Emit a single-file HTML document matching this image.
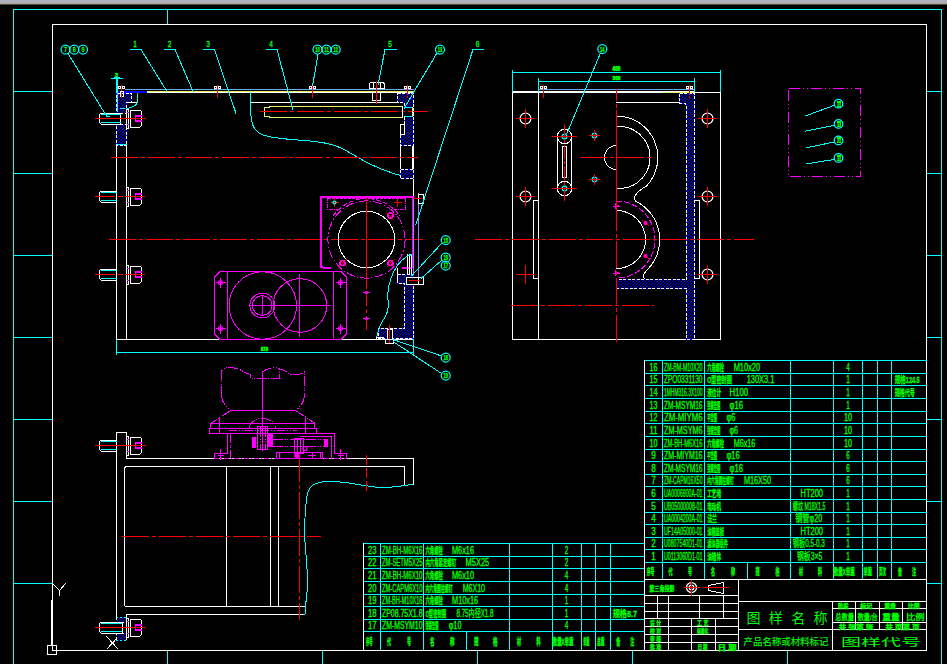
<!DOCTYPE html>
<html lang="zh"><head><meta charset="utf-8"><title>CAD drawing</title>
<style>
html,body{margin:0;padding:0;background:#000;overflow:hidden}
svg{display:block}
.la{font-family:"Liberation Sans","Noto Sans CJK SC",sans-serif}
.cj{font-family:"Liberation Sans","Noto Sans CJK SC",sans-serif}
</style></head><body>
<svg width="947" height="664" viewBox="0 0 947 664" shape-rendering="crispEdges" fill="none">
<rect x="0" y="0" width="947" height="664" fill="#000" stroke="none"/>
<rect x="0" y="0" width="947" height="3" fill="#adb0bb" stroke="none"/>
<rect x="0" y="3" width="947" height="1" fill="#a9a590" stroke="none"/>
<rect x="0" y="4" width="947" height="1" fill="#504d3c" stroke="none"/>
<line x1="13.5" y1="9" x2="13.5" y2="664" stroke="#00ffff" stroke-width="1"/>
<line x1="13" y1="9.5" x2="942" y2="9.5" stroke="#00ffff" stroke-width="1"/>
<line x1="941.5" y1="9" x2="941.5" y2="664" stroke="#00ffff" stroke-width="1"/>
<line x1="52.5" y1="24" x2="52.5" y2="651" stroke="#ffffff" stroke-width="1"/>
<line x1="52" y1="24.5" x2="927" y2="24.5" stroke="#ffffff" stroke-width="1"/>
<line x1="926.5" y1="24" x2="926.5" y2="651" stroke="#ffffff" stroke-width="1"/>
<line x1="52" y1="650.5" x2="927" y2="650.5" stroke="#ffffff" stroke-width="1"/>
<line x1="167.5" y1="9" x2="167.5" y2="24" stroke="#00ffff" stroke-width="1"/>
<line x1="13" y1="91.5" x2="52" y2="91.5" stroke="#00ffff" stroke-width="1"/>
<line x1="927" y1="91.5" x2="941" y2="91.5" stroke="#00ffff" stroke-width="1"/>
<line x1="13" y1="173.5" x2="52" y2="173.5" stroke="#00ffff" stroke-width="1"/>
<line x1="927" y1="173.5" x2="941" y2="173.5" stroke="#00ffff" stroke-width="1"/>
<line x1="13" y1="255.5" x2="52" y2="255.5" stroke="#00ffff" stroke-width="1"/>
<line x1="927" y1="255.5" x2="941" y2="255.5" stroke="#00ffff" stroke-width="1"/>
<line x1="13" y1="337.5" x2="52" y2="337.5" stroke="#00ffff" stroke-width="1"/>
<line x1="927" y1="337.5" x2="941" y2="337.5" stroke="#00ffff" stroke-width="1"/>
<line x1="13" y1="419.5" x2="52" y2="419.5" stroke="#00ffff" stroke-width="1"/>
<line x1="927" y1="419.5" x2="941" y2="419.5" stroke="#00ffff" stroke-width="1"/>
<line x1="13" y1="501.5" x2="52" y2="501.5" stroke="#00ffff" stroke-width="1"/>
<line x1="927" y1="501.5" x2="941" y2="501.5" stroke="#00ffff" stroke-width="1"/>
<line x1="13" y1="583.5" x2="52" y2="583.5" stroke="#00ffff" stroke-width="1"/>
<line x1="927" y1="583.5" x2="941" y2="583.5" stroke="#00ffff" stroke-width="1"/>
<line x1="167.5" y1="651" x2="167.5" y2="664" stroke="#00ffff" stroke-width="1"/>
<line x1="322.5" y1="651" x2="322.5" y2="664" stroke="#00ffff" stroke-width="1"/>
<line x1="477.5" y1="651" x2="477.5" y2="664" stroke="#00ffff" stroke-width="1"/>
<line x1="632.5" y1="651" x2="632.5" y2="664" stroke="#00ffff" stroke-width="1"/>
<line x1="787.5" y1="651" x2="787.5" y2="664" stroke="#00ffff" stroke-width="1"/>
<rect x="47.5" y="645.5" width="9" height="9" stroke="#ffffff" fill="none" stroke-width="1"/>
<rect x="51" y="600" width="2" height="46" fill="#fff" stroke="none"/>
<line x1="53.5" y1="584.5" x2="59.5" y2="590.5" stroke="#ffffff" stroke-width="1"/>
<line x1="65.5" y1="583.5" x2="59.5" y2="590.5" stroke="#ffffff" stroke-width="1"/>
<line x1="59.5" y1="590" x2="59.5" y2="596" stroke="#ffffff" stroke-width="1"/>
<line x1="106.5" y1="636.5" x2="118.5" y2="649.5" stroke="#ffffff" stroke-width="1"/>
<line x1="118.5" y1="636.5" x2="106.5" y2="649.5" stroke="#ffffff" stroke-width="1"/>
<line x1="644" y1="360.5" x2="927" y2="360.5" stroke="#00ffff" stroke-width="1"/>
<line x1="644" y1="373.5" x2="927" y2="373.5" stroke="#00ffff" stroke-width="1"/>
<line x1="644" y1="385.5" x2="927" y2="385.5" stroke="#00ffff" stroke-width="1"/>
<line x1="644" y1="398.5" x2="927" y2="398.5" stroke="#00ffff" stroke-width="1"/>
<line x1="644" y1="411.5" x2="927" y2="411.5" stroke="#00ffff" stroke-width="1"/>
<line x1="644" y1="423.5" x2="927" y2="423.5" stroke="#00ffff" stroke-width="1"/>
<line x1="644" y1="436.5" x2="927" y2="436.5" stroke="#00ffff" stroke-width="1"/>
<line x1="644" y1="449.5" x2="927" y2="449.5" stroke="#00ffff" stroke-width="1"/>
<line x1="644" y1="461.5" x2="927" y2="461.5" stroke="#00ffff" stroke-width="1"/>
<line x1="644" y1="474.5" x2="927" y2="474.5" stroke="#00ffff" stroke-width="1"/>
<line x1="644" y1="486.5" x2="927" y2="486.5" stroke="#00ffff" stroke-width="1"/>
<line x1="644" y1="499.5" x2="927" y2="499.5" stroke="#00ffff" stroke-width="1"/>
<line x1="644" y1="512.5" x2="927" y2="512.5" stroke="#00ffff" stroke-width="1"/>
<line x1="644" y1="524.5" x2="927" y2="524.5" stroke="#00ffff" stroke-width="1"/>
<line x1="644" y1="537.5" x2="927" y2="537.5" stroke="#00ffff" stroke-width="1"/>
<line x1="644" y1="549.5" x2="927" y2="549.5" stroke="#00ffff" stroke-width="1"/>
<line x1="644" y1="562.5" x2="927" y2="562.5" stroke="#00ffff" stroke-width="1"/>
<line x1="662.5" y1="360" x2="662.5" y2="579" stroke="#00ffff" stroke-width="1"/>
<line x1="704.5" y1="360" x2="704.5" y2="579" stroke="#00ffff" stroke-width="1"/>
<line x1="790.5" y1="360" x2="790.5" y2="579" stroke="#00ffff" stroke-width="1"/>
<line x1="833.5" y1="360" x2="833.5" y2="579" stroke="#00ffff" stroke-width="1"/>
<line x1="862.5" y1="360" x2="862.5" y2="579" stroke="#00ffff" stroke-width="1"/>
<line x1="877.5" y1="360" x2="877.5" y2="579" stroke="#00ffff" stroke-width="1"/>
<line x1="891.5" y1="360" x2="891.5" y2="579" stroke="#00ffff" stroke-width="1"/>
<line x1="747.5" y1="562" x2="747.5" y2="579" stroke="#00ffff" stroke-width="1"/>
<line x1="644.5" y1="360" x2="644.5" y2="651" stroke="#ffffff" stroke-width="1"/>
<line x1="644" y1="579.5" x2="927" y2="579.5" stroke="#ffffff" stroke-width="1"/>
<line x1="363" y1="543.5" x2="644" y2="543.5" stroke="#00ffff" stroke-width="1"/>
<line x1="363" y1="556.5" x2="644" y2="556.5" stroke="#00ffff" stroke-width="1"/>
<line x1="363" y1="568.5" x2="644" y2="568.5" stroke="#00ffff" stroke-width="1"/>
<line x1="363" y1="581.5" x2="644" y2="581.5" stroke="#00ffff" stroke-width="1"/>
<line x1="363" y1="594.5" x2="644" y2="594.5" stroke="#00ffff" stroke-width="1"/>
<line x1="363" y1="606.5" x2="644" y2="606.5" stroke="#00ffff" stroke-width="1"/>
<line x1="363" y1="619.5" x2="644" y2="619.5" stroke="#00ffff" stroke-width="1"/>
<line x1="363" y1="631.5" x2="644" y2="631.5" stroke="#00ffff" stroke-width="1"/>
<line x1="380.5" y1="543" x2="380.5" y2="650" stroke="#00ffff" stroke-width="1"/>
<line x1="423.5" y1="543" x2="423.5" y2="650" stroke="#00ffff" stroke-width="1"/>
<line x1="509.5" y1="543" x2="509.5" y2="650" stroke="#00ffff" stroke-width="1"/>
<line x1="552.5" y1="543" x2="552.5" y2="650" stroke="#00ffff" stroke-width="1"/>
<line x1="581.5" y1="543" x2="581.5" y2="650" stroke="#00ffff" stroke-width="1"/>
<line x1="595.5" y1="543" x2="595.5" y2="650" stroke="#00ffff" stroke-width="1"/>
<line x1="610.5" y1="543" x2="610.5" y2="650" stroke="#00ffff" stroke-width="1"/>
<line x1="466.5" y1="631" x2="466.5" y2="650" stroke="#00ffff" stroke-width="1"/>
<line x1="363.5" y1="543" x2="363.5" y2="651" stroke="#ffffff" stroke-width="1"/>
<line x1="644" y1="595.5" x2="738" y2="595.5" stroke="#ffffff" stroke-width="1"/>
<line x1="644" y1="603.5" x2="738" y2="603.5" stroke="#ffffff" stroke-width="1"/>
<line x1="644" y1="611.5" x2="738" y2="611.5" stroke="#ffffff" stroke-width="1"/>
<line x1="644" y1="618.5" x2="738" y2="618.5" stroke="#ffffff" stroke-width="1"/>
<line x1="644" y1="626.5" x2="738" y2="626.5" stroke="#ffffff" stroke-width="1"/>
<line x1="644" y1="634.5" x2="738" y2="634.5" stroke="#ffffff" stroke-width="1"/>
<line x1="644" y1="642.5" x2="738" y2="642.5" stroke="#ffffff" stroke-width="1"/>
<line x1="738.5" y1="579" x2="738.5" y2="650" stroke="#ffffff" stroke-width="1"/>
<line x1="657.5" y1="595" x2="657.5" y2="618" stroke="#ffffff" stroke-width="1"/>
<line x1="668.5" y1="595" x2="668.5" y2="650" stroke="#ffffff" stroke-width="1"/>
<line x1="699.5" y1="595" x2="699.5" y2="618" stroke="#ffffff" stroke-width="1"/>
<line x1="723.5" y1="595" x2="723.5" y2="618" stroke="#ffffff" stroke-width="1"/>
<line x1="691.5" y1="618" x2="691.5" y2="650" stroke="#ffffff" stroke-width="1"/>
<line x1="715.5" y1="618" x2="715.5" y2="650" stroke="#ffffff" stroke-width="1"/>
<line x1="738" y1="601.5" x2="927" y2="601.5" stroke="#ffffff" stroke-width="1"/>
<line x1="738" y1="629.5" x2="927" y2="629.5" stroke="#ffffff" stroke-width="1"/>
<line x1="832.5" y1="601" x2="832.5" y2="650" stroke="#ffffff" stroke-width="1"/>
<line x1="832" y1="608.5" x2="927" y2="608.5" stroke="#ffffff" stroke-width="1"/>
<line x1="832" y1="622.5" x2="927" y2="622.5" stroke="#ffffff" stroke-width="1"/>
<line x1="855.5" y1="601" x2="855.5" y2="629" stroke="#ffffff" stroke-width="1"/>
<line x1="879.5" y1="601" x2="879.5" y2="629" stroke="#ffffff" stroke-width="1"/>
<line x1="902.5" y1="601" x2="902.5" y2="629" stroke="#ffffff" stroke-width="1"/>
<circle cx="691.5" cy="587.5" r="5" stroke="#ffffff" fill="none" stroke-width="1.25" shape-rendering="geometricPrecision"/>
<circle cx="691.5" cy="587.5" r="2.3" stroke="#ffffff" fill="none" stroke-width="1.25" shape-rendering="geometricPrecision"/>
<line x1="684" y1="587.5" x2="700" y2="587.5" stroke="#ff0000" stroke-width="1"/>
<line x1="691.5" y1="580" x2="691.5" y2="596" stroke="#ff0000" stroke-width="1"/>
<path d="M708.5 585.5 L723.5 582.5 L723.5 593.5 L708.5 590.5 Z" stroke="#ffffff" fill="none" stroke-width="1"/>
<line x1="703" y1="587.5" x2="729" y2="587.5" stroke="#ff0000" stroke-width="1"/>
<defs>
<pattern id="hb" width="3" height="3" patternUnits="userSpaceOnUse">
<rect width="3" height="3" fill="#000"/><rect x="0" y="2" width="1" height="1" fill="#0000ff"/><rect x="1" y="1" width="1" height="1" fill="#0000ff"/><rect x="2" y="0" width="1" height="1" fill="#0000ff"/>
</pattern>
</defs>
<line x1="116.5" y1="145" x2="116.5" y2="339" stroke="#ffffff" stroke-width="1"/>
<line x1="126.5" y1="145" x2="126.5" y2="339" stroke="#ffffff" stroke-width="1"/>
<line x1="400.5" y1="145" x2="400.5" y2="170" stroke="#ffffff" stroke-width="1"/>
<line x1="413.5" y1="92" x2="413.5" y2="197" stroke="#ffffff" stroke-width="1"/>
<line x1="412.5" y1="145" x2="412.5" y2="170" stroke="#ffffff" stroke-width="1"/>
<line x1="116" y1="339.5" x2="222" y2="339.5" stroke="#ffffff" stroke-width="1"/>
<line x1="339" y1="339.5" x2="414" y2="339.5" stroke="#ffffff" stroke-width="1"/>
<line x1="125" y1="89.5" x2="414" y2="89.5" stroke="#6ea6f0" stroke-width="1"/>
<line x1="147" y1="91.5" x2="414" y2="91.5" stroke="#e6f064" stroke-width="1"/>
<line x1="147" y1="92.5" x2="414" y2="92.5" stroke="#ffffff" stroke-width="1"/>
<rect x="117" y="91" width="30" height="2" fill="#0000ff" stroke="none"/>
<line x1="250" y1="102.5" x2="404" y2="102.5" stroke="#ffffff" stroke-width="1"/>
<path d="M116.5 93 L131.5 93 L131.5 102 L126.5 102 L126.5 145.5 L116.5 145.5 Z" fill="url(#hb)" stroke="none"/>
<path d="M116.5 93 L131.5 93 L131.5 102 L126.5 102 L126.5 145.5 L116.5 145.5 Z" fill="none" stroke="#0000ff" stroke-width="1"/>
<path d="M116.5 93 L131.5 93 L131.5 102 L126.5 102 L126.5 145.5 L116.5 145.5 Z" fill="none" stroke="#fff" stroke-width="1" stroke-dasharray="3 1.5"/>
<line x1="126" y1="102.5" x2="138" y2="102.5" stroke="#ffffff" stroke-width="1"/>
<line x1="137.5" y1="93" x2="137.5" y2="102" stroke="#00ffff" stroke-width="1"/>
<path d="M137.5 102.5 Q136 106.5 127 108.5" stroke="#00ffff" fill="none" stroke-width="1"/>
<line x1="120" y1="108.5" x2="125" y2="108.5" stroke="#00ffff" stroke-width="1"/>
<line x1="116.5" y1="144.5" x2="126.5" y2="144.5" stroke="#00ffff" stroke-width="1"/>
<line x1="116.5" y1="78" x2="116.5" y2="93" stroke="#00ffff" stroke-width="1"/>
<line x1="117.5" y1="78" x2="117.5" y2="112" stroke="#00ffff" stroke-width="1"/>
<line x1="111" y1="78.5" x2="123" y2="78.5" stroke="#00ffff" stroke-width="1"/>
<line x1="114" y1="77.5" x2="120" y2="77.5" stroke="#00ffff" stroke-width="1"/>
<text x="116.5" y="77" font-size="6" fill="#00ff00" stroke="#00ff00" stroke-width="0.35" text-anchor="middle" font-weight="bold" class="la">3</text>
<rect x="118.0" y="86" width="7" height="3" fill="#fff" stroke="none"/>
<rect x="119.0" y="87" width="1" height="1" fill="#000" stroke="none"/><rect x="123.0" y="87" width="1" height="1" fill="#000" stroke="none"/>
<line x1="121.5" y1="85" x2="121.5" y2="97.5" stroke="#ff0000" stroke-width="1"/>
<rect x="214.0" y="86" width="7" height="3" fill="#fff" stroke="none"/>
<rect x="215.0" y="87" width="1" height="1" fill="#000" stroke="none"/><rect x="219.0" y="87" width="1" height="1" fill="#000" stroke="none"/>
<line x1="217.5" y1="85" x2="217.5" y2="97.5" stroke="#ff0000" stroke-width="1"/>
<rect x="309.0" y="86" width="7" height="3" fill="#fff" stroke="none"/>
<rect x="310.0" y="87" width="1" height="1" fill="#000" stroke="none"/><rect x="314.0" y="87" width="1" height="1" fill="#000" stroke="none"/>
<line x1="312.5" y1="85" x2="312.5" y2="97.5" stroke="#ff0000" stroke-width="1"/>
<rect x="404.0" y="86" width="7" height="3" fill="#fff" stroke="none"/>
<rect x="405.0" y="87" width="1" height="1" fill="#000" stroke="none"/><rect x="409.0" y="87" width="1" height="1" fill="#000" stroke="none"/>
<line x1="407.5" y1="85" x2="407.5" y2="97.5" stroke="#ff0000" stroke-width="1"/>
<rect x="120" y="91" width="3.5" height="5" stroke="#ffffff" fill="none" stroke-width="1"/>
<path d="M370.5 82.5 L383 82.5 L384.5 84 L384.5 88 L369.5 88 L369.5 84 Z" stroke="#ffffff" fill="none" stroke-width="1"/>
<line x1="373.5" y1="83" x2="373.5" y2="88" stroke="#ffffff" stroke-width="1"/>
<line x1="380.5" y1="83" x2="380.5" y2="88" stroke="#ffffff" stroke-width="1"/>
<rect x="372.5" y="92" width="8" height="8.5" stroke="#ffffff" fill="none" stroke-width="1"/>
<line x1="376.5" y1="80.5" x2="376.5" y2="103.5" stroke="#ff0000" stroke-width="1"/>
<path d="M402.5 106.5 L269.5 106.5 L269.5 107.5 L264.5 107.5 L264.5 116.5 L269.5 116.5 L269.5 117.5 L402.5 117.5" stroke="#e6f064" fill="none" stroke-width="1"/>
<line x1="260" y1="111.5" x2="428" y2="111.5" stroke="#ff0000" stroke-width="1" stroke-dasharray="27 3 4 3"/>
<path d="M250.5 92 L250.5 104 C250.5 122 252 130 262 134.5 C272 139 295 139.5 310 141 C330 143 340 146 352 154 C366 163 385 173 413 178.5" stroke="#00ffff" fill="none" stroke-width="1"/>
<path d="M397.5 93 L413.5 93 L413.5 107 L404.5 107 L404.5 102.5 L397.5 102.5 Z" fill="url(#hb)" stroke="none"/>
<path d="M397.5 93 L413.5 93 L413.5 107 L404.5 107 L404.5 102.5 L397.5 102.5 Z" fill="none" stroke="#0000ff" stroke-width="1"/>
<path d="M397.5 93 L413.5 93 L413.5 107 L404.5 107 L404.5 102.5 L397.5 102.5 Z" fill="none" stroke="#fff" stroke-width="1" stroke-dasharray="3 1.5"/>
<path d="M404.5 116.5 L413.5 116.5 L413.5 145.5 L400.5 145.5 L400.5 134 L404.5 134 Z" fill="url(#hb)" stroke="none"/>
<path d="M404.5 116.5 L413.5 116.5 L413.5 145.5 L400.5 145.5 L400.5 134 L404.5 134 Z" fill="none" stroke="#0000ff" stroke-width="1"/>
<path d="M404.5 116.5 L413.5 116.5 L413.5 145.5 L400.5 145.5 L400.5 134 L404.5 134 Z" fill="none" stroke="#fff" stroke-width="1" stroke-dasharray="3 1.5"/>
<rect x="400.5" y="124" width="4" height="10" stroke="#ffffff" fill="none" stroke-width="1"/>
<line x1="404.5" y1="107.5" x2="413" y2="107.5" stroke="#00ffff" stroke-width="1"/>
<line x1="404.5" y1="116.5" x2="413" y2="116.5" stroke="#00ffff" stroke-width="1"/>
<line x1="412.5" y1="107" x2="412.5" y2="117" stroke="#e6f064" stroke-width="1"/>
<line x1="402.5" y1="106" x2="402.5" y2="118" stroke="#ffffff" stroke-width="1"/>
<line x1="121.5" y1="93" x2="121.5" y2="97.5" stroke="#ff0000" stroke-width="1" stroke-dasharray="2 1"/>
<line x1="407.5" y1="93" x2="407.5" y2="97.5" stroke="#ff0000" stroke-width="1" stroke-dasharray="2 1"/>
<path d="M400.5 169.5 L413.5 169.5 L413.5 178.5 L400.5 178.5 Z" fill="url(#hb)" stroke="none"/>
<path d="M400.5 169.5 L413.5 169.5 L413.5 178.5 L400.5 178.5 Z" fill="none" stroke="#0000ff" stroke-width="1"/>
<path d="M400.5 169.5 L413.5 169.5 L413.5 178.5 L400.5 178.5 Z" fill="none" stroke="#fff" stroke-width="1" stroke-dasharray="3 1.5"/>
<line x1="111" y1="157.5" x2="418" y2="157.5" stroke="#ff0000" stroke-width="1" stroke-dasharray="27 3 4 3"/>
<line x1="109" y1="239.5" x2="423" y2="239.5" stroke="#ff0000" stroke-width="1" stroke-dasharray="27 3 4 3"/>
<rect x="120.5" y="113.0" width="6.0" height="11" fill="#000" stroke="none"/>
<line x1="120.5" y1="113.0" x2="126.5" y2="113.0" stroke="#ffffff" stroke-width="1" stroke-dasharray="2 2"/>
<line x1="120.5" y1="124.0" x2="126.5" y2="124.0" stroke="#ffffff" stroke-width="1" stroke-dasharray="2 2"/>
<path d="M120.5 113.0 L101.0 113.0 L99.5 114.5 L99.5 122.5 L101.0 124.0 L120.5 124.0 Z" stroke="#ffffff" fill="#000" stroke-width="1"/>
<line x1="101.0" y1="114.5" x2="120.5" y2="114.5" stroke="#00ffff" stroke-width="1"/>
<line x1="101.0" y1="122.5" x2="120.5" y2="122.5" stroke="#00ffff" stroke-width="1"/>
<rect x="126.5" y="109.0" width="2" height="19" stroke="#ffffff" fill="#000" stroke-width="1"/>
<path d="M130.5 110.0 L140 110.0 L141.5 111.5 L141.5 125.5 L140 127.0 L130.5 127.0 Z" stroke="#ffffff" fill="none" stroke-width="1"/>
<path d="M141.5 116.0 L136 116.0 Q134.5 118.5 136 121.0 L141.5 121.0" stroke="#ff00ff" fill="none" stroke-width="1.6"/>
<line x1="127" y1="112.5" x2="128.5" y2="112.5" stroke="#ff00ff" stroke-width="1"/>
<line x1="127" y1="124.5" x2="128.5" y2="124.5" stroke="#ff00ff" stroke-width="1"/>
<line x1="95" y1="118.5" x2="146" y2="118.5" stroke="#ff0000" stroke-width="1"/>
<path d="M116.5 191.0 L101.0 191.0 L99.5 192.5 L99.5 200.5 L101.0 202.0 L116.5 202.0" stroke="#ffffff" fill="none" stroke-width="1"/>
<line x1="101.0" y1="192.5" x2="116.5" y2="192.5" stroke="#00ffff" stroke-width="1"/>
<line x1="101.0" y1="200.5" x2="116.5" y2="200.5" stroke="#00ffff" stroke-width="1"/>
<rect x="126.5" y="187.0" width="2" height="19" stroke="#ffffff" fill="#000" stroke-width="1"/>
<path d="M130.5 188.0 L140 188.0 L141.5 189.5 L141.5 203.5 L140 205.0 L130.5 205.0 Z" stroke="#ffffff" fill="none" stroke-width="1"/>
<path d="M141.5 194.0 L136 194.0 Q134.5 196.5 136 199.0 L141.5 199.0" stroke="#ff00ff" fill="none" stroke-width="1.6"/>
<line x1="127" y1="190.5" x2="128.5" y2="190.5" stroke="#ff00ff" stroke-width="1"/>
<line x1="127" y1="202.5" x2="128.5" y2="202.5" stroke="#ff00ff" stroke-width="1"/>
<line x1="95" y1="196.5" x2="146" y2="196.5" stroke="#ff0000" stroke-width="1" stroke-dasharray="20 3 5 2"/>
<path d="M116.5 269.0 L101.0 269.0 L99.5 270.5 L99.5 278.5 L101.0 280.0 L116.5 280.0" stroke="#ffffff" fill="none" stroke-width="1"/>
<line x1="101.0" y1="270.5" x2="116.5" y2="270.5" stroke="#00ffff" stroke-width="1"/>
<line x1="101.0" y1="278.5" x2="116.5" y2="278.5" stroke="#00ffff" stroke-width="1"/>
<rect x="126.5" y="265.0" width="2" height="19" stroke="#ffffff" fill="#000" stroke-width="1"/>
<path d="M130.5 266.0 L140 266.0 L141.5 267.5 L141.5 281.5 L140 283.0 L130.5 283.0 Z" stroke="#ffffff" fill="none" stroke-width="1"/>
<path d="M141.5 272.0 L136 272.0 Q134.5 274.5 136 277.0 L141.5 277.0" stroke="#ff00ff" fill="none" stroke-width="1.6"/>
<line x1="127" y1="268.5" x2="128.5" y2="268.5" stroke="#ff00ff" stroke-width="1"/>
<line x1="127" y1="280.5" x2="128.5" y2="280.5" stroke="#ff00ff" stroke-width="1"/>
<line x1="95" y1="274.5" x2="146" y2="274.5" stroke="#ff0000" stroke-width="1" stroke-dasharray="20 3 5 2"/>
<path d="M220 271.5 L341 271.5 L346.5 277 L346.5 334 L341 339.5 L220 339.5 L214.5 334 L214.5 277 Z" stroke="#ff00ff" fill="none" stroke-width="1"/>
<line x1="227.5" y1="272" x2="227.5" y2="339" stroke="#ff00ff" stroke-width="1"/>
<line x1="333.5" y1="272" x2="333.5" y2="339" stroke="#ff00ff" stroke-width="1"/>
<circle cx="262.8" cy="305.5" r="33.7" stroke="#ff00ff" fill="none" stroke-width="1"/>
<circle cx="299.9" cy="305.5" r="26.8" stroke="#ff00ff" fill="none" stroke-width="1"/>
<circle cx="262.3" cy="305.5" r="12.4" stroke="#ff00ff" fill="none" stroke-width="1"/>
<circle cx="262.3" cy="305.5" r="9.9" stroke="#ff00ff" fill="none" stroke-width="1"/>
<line x1="250" y1="305.5" x2="331" y2="305.5" stroke="#ff00ff" stroke-width="1"/>
<line x1="262.5" y1="296" x2="262.5" y2="316" stroke="#ff00ff" stroke-width="1"/>
<line x1="299.5" y1="274" x2="299.5" y2="337" stroke="#ff00ff" stroke-width="1"/>
<circle cx="220.5" cy="282.5" r="2" stroke="#ff00ff" fill="none" stroke-width="1.25" shape-rendering="geometricPrecision"/>
<line x1="215.5" y1="282.5" x2="225.5" y2="282.5" stroke="#ff00ff" stroke-width="1"/>
<line x1="220.5" y1="277.5" x2="220.5" y2="287.5" stroke="#ff00ff" stroke-width="1"/>
<circle cx="220.5" cy="328.5" r="2" stroke="#ff00ff" fill="none" stroke-width="1.25" shape-rendering="geometricPrecision"/>
<line x1="215.5" y1="328.5" x2="225.5" y2="328.5" stroke="#ff00ff" stroke-width="1"/>
<line x1="220.5" y1="323.5" x2="220.5" y2="333.5" stroke="#ff00ff" stroke-width="1"/>
<circle cx="340.5" cy="282.5" r="2" stroke="#ff00ff" fill="none" stroke-width="1.25" shape-rendering="geometricPrecision"/>
<line x1="335.5" y1="282.5" x2="345.5" y2="282.5" stroke="#ff00ff" stroke-width="1"/>
<line x1="340.5" y1="277.5" x2="340.5" y2="287.5" stroke="#ff00ff" stroke-width="1"/>
<circle cx="340.5" cy="328.5" r="2" stroke="#ff00ff" fill="none" stroke-width="1.25" shape-rendering="geometricPrecision"/>
<line x1="335.5" y1="328.5" x2="345.5" y2="328.5" stroke="#ff00ff" stroke-width="1"/>
<line x1="340.5" y1="323.5" x2="340.5" y2="333.5" stroke="#ff00ff" stroke-width="1"/>
<path d="M330.5 267.5 L323 267.5 Q320.5 267.5 320.5 265 L320.5 196.5 L412.5 196.5 L412.5 268" stroke="#ff00ff" fill="none" stroke-width="2"/>
<line x1="402" y1="267.5" x2="412" y2="267.5" stroke="#ff00ff" stroke-width="2"/>
<path d="M340 209.5 L327.5 209.5 L327.5 198 M392.5 209.5 L405.5 209.5 L405.5 198" stroke="#ff00ff" fill="none" stroke-width="1" stroke-dasharray="4 1 1 1"/>
<line x1="328" y1="198.5" x2="405" y2="198.5" stroke="#ff00ff" stroke-width="1" stroke-dasharray="3 1"/>
<circle cx="366.5" cy="239.5" r="28.2" stroke="#ffffff" fill="none" stroke-width="1"/>
<circle cx="366.5" cy="239.5" r="38.6" stroke="#ff00ff" fill="none" stroke-width="1" stroke-dasharray="9 2 1.5 2"/>
<path d="M333 216 A41 41 0 0 1 400 216" stroke="#ff00ff" fill="none" stroke-width="1" stroke-dasharray="5 2"/>
<circle cx="390.5" cy="215.5" r="2.5" stroke="#ff00ff" fill="none" stroke-width="1.5"/>
<line x1="386.5" y1="211.5" x2="394.5" y2="219.5" stroke="#ff0000" stroke-width="0.7"/>
<line x1="386.5" y1="219.5" x2="394.5" y2="211.5" stroke="#ff0000" stroke-width="0.7"/>
<circle cx="342.5" cy="263" r="2.5" stroke="#ff00ff" fill="none" stroke-width="1.5"/>
<line x1="338.5" y1="259" x2="346.5" y2="267" stroke="#ff0000" stroke-width="0.7"/>
<line x1="338.5" y1="267" x2="346.5" y2="259" stroke="#ff0000" stroke-width="0.7"/>
<circle cx="390.5" cy="263" r="2.5" stroke="#ff00ff" fill="none" stroke-width="1.5"/>
<line x1="386.5" y1="259" x2="394.5" y2="267" stroke="#ff0000" stroke-width="0.7"/>
<line x1="386.5" y1="267" x2="394.5" y2="259" stroke="#ff0000" stroke-width="0.7"/>
<line x1="330.5" y1="202.5" x2="338.5" y2="202.5" stroke="#ff0000" stroke-width="1"/>
<line x1="334.5" y1="198.5" x2="334.5" y2="206.5" stroke="#ff0000" stroke-width="1"/>
<line x1="393.5" y1="202.5" x2="401.5" y2="202.5" stroke="#ff0000" stroke-width="1"/>
<line x1="397.5" y1="198.5" x2="397.5" y2="206.5" stroke="#ff0000" stroke-width="1"/>
<circle cx="334.5" cy="202.5" r="1.5" stroke="#00ffff" fill="none" stroke-width="1.25" shape-rendering="geometricPrecision"/>
<line x1="366.5" y1="198" x2="366.5" y2="285" stroke="#ff0000" stroke-width="1"/>
<line x1="366.5" y1="285" x2="366.5" y2="332" stroke="#ff0000" stroke-width="1" stroke-dasharray="4 3 14 3"/>
<line x1="363" y1="292.5" x2="370" y2="292.5" stroke="#ff00ff" stroke-width="1"/>
<circle cx="366.5" cy="292.5" r="1" stroke="#ff00ff" fill="#ff00ff" stroke-width="1.25" shape-rendering="geometricPrecision"/>
<line x1="363" y1="318.5" x2="370" y2="318.5" stroke="#ff00ff" stroke-width="1"/>
<circle cx="366.5" cy="318.5" r="1" stroke="#ff00ff" fill="#ff00ff" stroke-width="1.25" shape-rendering="geometricPrecision"/>
<line x1="413.5" y1="197" x2="413.5" y2="284" stroke="#9a7bff" stroke-width="1"/>
<line x1="418.5" y1="193" x2="418.5" y2="284" stroke="#9a7bff" stroke-width="1"/>
<line x1="413" y1="284.5" x2="419" y2="284.5" stroke="#9a7bff" stroke-width="1"/>
<rect x="418.5" y="194" width="5" height="9.5" stroke="#ffffff" fill="none" stroke-width="1"/>
<line x1="413" y1="198.5" x2="421" y2="198.5" stroke="#ff0000" stroke-width="1"/>
<path d="M397.5 274.5 L413.5 274.5 L413.5 338 L378.5 338 L378.5 328.5 L404.5 328.5 L404.5 283.5 L397.5 283.5 Z" fill="url(#hb)" stroke="none"/>
<path d="M397.5 274.5 L413.5 274.5 L413.5 338 L378.5 338 L378.5 328.5 L404.5 328.5 L404.5 283.5 L397.5 283.5 Z" fill="none" stroke="#0000ff" stroke-width="1"/>
<path d="M397.5 274.5 L413.5 274.5 L413.5 338 L378.5 338 L378.5 328.5 L404.5 328.5 L404.5 283.5 L397.5 283.5 Z" fill="none" stroke="#fff" stroke-width="1" stroke-dasharray="3 1.5"/>
<line x1="397.5" y1="268" x2="397.5" y2="283" stroke="#ffffff" stroke-width="1"/>
<line x1="407.5" y1="254" x2="407.5" y2="275" stroke="#ffffff" stroke-width="1"/>
<line x1="409.5" y1="254" x2="409.5" y2="275" stroke="#ffffff" stroke-width="1"/>
<line x1="411.5" y1="254" x2="411.5" y2="275" stroke="#ffffff" stroke-width="1"/>
<rect x="406.5" y="277" width="16.5" height="7" stroke="#ffffff" fill="#000" stroke-width="1"/>
<line x1="418.5" y1="277" x2="418.5" y2="284" stroke="#ffffff" stroke-width="1"/>
<line x1="409" y1="280.5" x2="420" y2="280.5" stroke="#ff0000" stroke-width="1"/>
<path d="M412 254.5 C404 256.5 398 263 393.5 272 C389 282 387 290 388 300 C389 308 388 313 382 322 C379 328 377 333 376.5 339" stroke="#00ffff" fill="none" stroke-width="1"/>
<rect x="387.5" y="329" width="5" height="10" stroke="#ffffff" fill="#000" stroke-width="1"/>
<line x1="389.5" y1="325" x2="389.5" y2="343" stroke="#ff0000" stroke-width="1"/>
<rect x="385.5" y="339.5" width="8" height="4" stroke="#ffffff" fill="none" stroke-width="1"/>
<rect x="376.5" y="337.5" width="7" height="2" stroke="#ffffff" fill="none" stroke-width="1"/>
<line x1="116" y1="352.5" x2="414" y2="352.5" stroke="#00ffff" stroke-width="1"/>
<line x1="116.5" y1="340" x2="116.5" y2="355" stroke="#00ffff" stroke-width="1"/>
<line x1="413.5" y1="339" x2="413.5" y2="355" stroke="#00ffff" stroke-width="1"/>
<text x="264.5" y="351" font-size="5.5" fill="#00ff00" stroke="#00ff00" stroke-width="0.7" text-anchor="middle" font-weight="bold" class="la" textLength="7" lengthAdjust="spacingAndGlyphs">873</text>
<circle cx="65.5" cy="49.5" r="4.5" stroke="#00ffff" fill="none" stroke-width="1.25" shape-rendering="geometricPrecision"/>
<text x="65.5" y="52.1" font-size="7" fill="#00ff00" stroke="#00ff00" stroke-width="0.35" text-anchor="middle" font-weight="normal" class="la" textLength="3" lengthAdjust="spacingAndGlyphs">7</text>
<circle cx="74.2" cy="49.5" r="4.5" stroke="#00ffff" fill="none" stroke-width="1.25" shape-rendering="geometricPrecision"/>
<text x="74.2" y="52.1" font-size="7" fill="#00ff00" stroke="#00ff00" stroke-width="0.35" text-anchor="middle" font-weight="normal" class="la" textLength="3" lengthAdjust="spacingAndGlyphs">8</text>
<circle cx="83" cy="49.5" r="4.5" stroke="#00ffff" fill="none" stroke-width="1.25" shape-rendering="geometricPrecision"/>
<text x="83" y="52.1" font-size="7" fill="#00ff00" stroke="#00ff00" stroke-width="0.35" text-anchor="middle" font-weight="normal" class="la" textLength="3" lengthAdjust="spacingAndGlyphs">9</text>
<line x1="68" y1="53.5" x2="106.5" y2="116" stroke="#00ffff" stroke-width="1"/>
<line x1="106" y1="116.5" x2="110" y2="116.5" stroke="#00ffff" stroke-width="1"/>
<line x1="130" y1="49.5" x2="141" y2="49.5" stroke="#00ffff" stroke-width="1"/>
<text x="135" y="47" font-size="8.5" fill="#00ff00" stroke="#00ff00" stroke-width="0.35" text-anchor="middle" font-weight="normal" class="la" textLength="3.6" lengthAdjust="spacingAndGlyphs">1</text>
<line x1="141" y1="49.5" x2="167" y2="91.5" stroke="#00ffff" stroke-width="1"/>
<line x1="164" y1="49.5" x2="175" y2="49.5" stroke="#00ffff" stroke-width="1"/>
<text x="169.5" y="47" font-size="8.5" fill="#00ff00" stroke="#00ff00" stroke-width="0.35" text-anchor="middle" font-weight="normal" class="la" textLength="3.6" lengthAdjust="spacingAndGlyphs">2</text>
<line x1="175" y1="49.5" x2="193.5" y2="92.5" stroke="#00ffff" stroke-width="1"/>
<line x1="203" y1="49.5" x2="214" y2="49.5" stroke="#00ffff" stroke-width="1"/>
<text x="208" y="47" font-size="8.5" fill="#00ff00" stroke="#00ff00" stroke-width="0.35" text-anchor="middle" font-weight="normal" class="la" textLength="3.6" lengthAdjust="spacingAndGlyphs">3</text>
<line x1="214.5" y1="49.5" x2="236" y2="113.5" stroke="#00ffff" stroke-width="1"/>
<line x1="266" y1="49.5" x2="277" y2="49.5" stroke="#00ffff" stroke-width="1"/>
<text x="271" y="47" font-size="8.5" fill="#00ff00" stroke="#00ff00" stroke-width="0.35" text-anchor="middle" font-weight="normal" class="la" textLength="3.6" lengthAdjust="spacingAndGlyphs">4</text>
<line x1="277" y1="49.5" x2="293" y2="110" stroke="#00ffff" stroke-width="1"/>
<circle cx="317.5" cy="49.5" r="4.5" stroke="#00ffff" fill="none" stroke-width="1.25" shape-rendering="geometricPrecision"/>
<text x="317.5" y="52.1" font-size="7" fill="#00ff00" stroke="#00ff00" stroke-width="0.35" text-anchor="middle" font-weight="bold" class="la" textLength="4.4" lengthAdjust="spacingAndGlyphs">10</text>
<circle cx="326.5" cy="49.5" r="4.5" stroke="#00ffff" fill="none" stroke-width="1.25" shape-rendering="geometricPrecision"/>
<text x="326.5" y="52.1" font-size="7" fill="#00ff00" stroke="#00ff00" stroke-width="0.35" text-anchor="middle" font-weight="bold" class="la" textLength="4.4" lengthAdjust="spacingAndGlyphs">11</text>
<circle cx="335.7" cy="49.5" r="4.5" stroke="#00ffff" fill="none" stroke-width="1.25" shape-rendering="geometricPrecision"/>
<text x="335.7" y="52.1" font-size="7" fill="#00ff00" stroke="#00ff00" stroke-width="0.35" text-anchor="middle" font-weight="bold" class="la" textLength="4.4" lengthAdjust="spacingAndGlyphs">12</text>
<line x1="318" y1="54" x2="312.5" y2="86.5" stroke="#00ffff" stroke-width="1"/>
<line x1="385" y1="49.5" x2="397" y2="49.5" stroke="#00ffff" stroke-width="1"/>
<text x="390" y="47" font-size="8.5" fill="#00ff00" stroke="#00ff00" stroke-width="0.35" text-anchor="middle" font-weight="normal" class="la" textLength="3.6" lengthAdjust="spacingAndGlyphs">5</text>
<line x1="385" y1="49.5" x2="378" y2="85" stroke="#00ffff" stroke-width="1"/>
<circle cx="440" cy="49.5" r="4.5" stroke="#00ffff" fill="none" stroke-width="1.25" shape-rendering="geometricPrecision"/>
<text x="440" y="52.1" font-size="7" fill="#00ff00" stroke="#00ff00" stroke-width="0.35" text-anchor="middle" font-weight="bold" class="la" textLength="4.4" lengthAdjust="spacingAndGlyphs">13</text>
<line x1="437" y1="53" x2="404" y2="108.5" stroke="#00ffff" stroke-width="1"/>
<line x1="473" y1="49.5" x2="484" y2="49.5" stroke="#00ffff" stroke-width="1"/>
<text x="477.5" y="47" font-size="8.5" fill="#00ff00" stroke="#00ff00" stroke-width="0.35" text-anchor="middle" font-weight="normal" class="la" textLength="3.6" lengthAdjust="spacingAndGlyphs">6</text>
<line x1="473" y1="49.5" x2="415.5" y2="225.5" stroke="#00ffff" stroke-width="1"/>
<circle cx="445.7" cy="240" r="4.5" stroke="#00ffff" fill="none" stroke-width="1.25" shape-rendering="geometricPrecision"/>
<text x="445.7" y="242.6" font-size="7" fill="#00ff00" stroke="#00ff00" stroke-width="0.35" text-anchor="middle" font-weight="bold" class="la" textLength="4.4" lengthAdjust="spacingAndGlyphs">15</text>
<circle cx="445.7" cy="257.5" r="4.5" stroke="#00ffff" fill="none" stroke-width="1.25" shape-rendering="geometricPrecision"/>
<text x="445.7" y="260.1" font-size="7" fill="#00ff00" stroke="#00ff00" stroke-width="0.35" text-anchor="middle" font-weight="bold" class="la" textLength="4.4" lengthAdjust="spacingAndGlyphs">16</text>
<circle cx="445.7" cy="265.5" r="4.5" stroke="#00ffff" fill="none" stroke-width="1.25" shape-rendering="geometricPrecision"/>
<text x="445.7" y="268.1" font-size="7" fill="#00ff00" stroke="#00ff00" stroke-width="0.35" text-anchor="middle" font-weight="bold" class="la" textLength="4.4" lengthAdjust="spacingAndGlyphs">17</text>
<line x1="442" y1="243" x2="411.5" y2="276" stroke="#00ffff" stroke-width="1"/>
<line x1="442" y1="260" x2="421" y2="278.5" stroke="#00ffff" stroke-width="1"/>
<circle cx="445.7" cy="357.5" r="4.5" stroke="#00ffff" fill="none" stroke-width="1.25" shape-rendering="geometricPrecision"/>
<text x="445.7" y="360.1" font-size="7" fill="#00ff00" stroke="#00ff00" stroke-width="0.35" text-anchor="middle" font-weight="bold" class="la" textLength="4.4" lengthAdjust="spacingAndGlyphs">18</text>
<circle cx="445.7" cy="375.5" r="4.5" stroke="#00ffff" fill="none" stroke-width="1.25" shape-rendering="geometricPrecision"/>
<text x="445.7" y="378.1" font-size="7" fill="#00ff00" stroke="#00ff00" stroke-width="0.35" text-anchor="middle" font-weight="bold" class="la" textLength="4.4" lengthAdjust="spacingAndGlyphs">19</text>
<line x1="441.5" y1="356" x2="393" y2="339.5" stroke="#00ffff" stroke-width="1"/>
<line x1="441.5" y1="373.5" x2="393" y2="341.5" stroke="#00ffff" stroke-width="1"/>
<line x1="512.5" y1="92" x2="512.5" y2="339" stroke="#ffffff" stroke-width="1"/>
<line x1="538.5" y1="92" x2="538.5" y2="339" stroke="#ffffff" stroke-width="1"/>
<line x1="720.5" y1="92" x2="720.5" y2="339" stroke="#ffffff" stroke-width="1"/>
<line x1="512" y1="339.5" x2="721" y2="339.5" stroke="#ffffff" stroke-width="1"/>
<rect x="512" y="91" width="183" height="2" fill="#fff" stroke="none"/>
<line x1="694" y1="92.5" x2="721" y2="92.5" stroke="#ffffff" stroke-width="1"/>
<line x1="538" y1="89.5" x2="695" y2="89.5" stroke="#6ea6f0" stroke-width="1"/>
<line x1="662" y1="92.5" x2="694" y2="92.5" stroke="#e6f064" stroke-width="1"/>
<line x1="512" y1="72.5" x2="721" y2="72.5" stroke="#00ffff" stroke-width="1"/>
<line x1="512.5" y1="70" x2="512.5" y2="92" stroke="#00ffff" stroke-width="1"/>
<line x1="720.5" y1="70" x2="720.5" y2="92" stroke="#00ffff" stroke-width="1"/>
<line x1="538" y1="81.5" x2="695" y2="81.5" stroke="#00ffff" stroke-width="1"/>
<line x1="538.5" y1="78" x2="538.5" y2="92" stroke="#00ffff" stroke-width="1"/>
<line x1="694.5" y1="78" x2="694.5" y2="92" stroke="#00ffff" stroke-width="1"/>
<text x="616.5" y="71" font-size="6.5" fill="#00ff00" stroke="#00ff00" stroke-width="0.6" text-anchor="middle" font-weight="bold" class="la" textLength="8" lengthAdjust="spacingAndGlyphs">400</text>
<text x="616.5" y="79.7" font-size="6" fill="#00ff00" stroke="#00ff00" stroke-width="0.6" text-anchor="middle" font-weight="bold" class="la" textLength="8" lengthAdjust="spacingAndGlyphs">300</text>
<rect x="540.0" y="86" width="7" height="3" fill="#fff" stroke="none"/>
<rect x="541.0" y="87" width="1" height="1" fill="#000" stroke="none"/><rect x="545.0" y="87" width="1" height="1" fill="#000" stroke="none"/>
<line x1="543.5" y1="85" x2="543.5" y2="97.5" stroke="#ff0000" stroke-width="1"/>
<rect x="686.0" y="86" width="7" height="3" fill="#fff" stroke="none"/>
<rect x="687.0" y="87" width="1" height="1" fill="#000" stroke="none"/><rect x="691.0" y="87" width="1" height="1" fill="#000" stroke="none"/>
<line x1="689.5" y1="85" x2="689.5" y2="97.5" stroke="#ff0000" stroke-width="1"/>
<path d="M679.5 93 L694.5 93 L694.5 339 L686.5 339 L686.5 288.5 L616.5 288.5 L616.5 279.5 L686.5 279.5 L686.5 105 L684.5 103 L679.5 103 Z" fill="url(#hb)" stroke="none"/>
<path d="M679.5 93 L694.5 93 L694.5 339 L686.5 339 L686.5 288.5 L616.5 288.5 L616.5 279.5 L686.5 279.5 L686.5 105 L684.5 103 L679.5 103 Z" fill="none" stroke="#0000ff" stroke-width="1"/>
<path d="M679.5 93 L694.5 93 L694.5 339 L686.5 339 L686.5 288.5 L616.5 288.5 L616.5 279.5 L686.5 279.5 L686.5 105 L684.5 103 L679.5 103 Z" fill="none" stroke="#fff" stroke-width="1" stroke-dasharray="3 1.5"/>
<line x1="616" y1="102.5" x2="680" y2="102.5" stroke="#ffffff" stroke-width="1"/>
<line x1="689.5" y1="93" x2="689.5" y2="97.5" stroke="#ff0000" stroke-width="1" stroke-dasharray="2 1"/>
<path d="M538.5 200.5 L533.5 200.5 L533.5 278.5 L538.5 278.5" stroke="#ffffff" fill="none" stroke-width="1"/>
<path d="M694.5 200.5 L699.5 200.5 L699.5 278.5 L694.5 278.5" stroke="#ffffff" fill="none" stroke-width="1"/>
<circle cx="525.5" cy="118.5" r="5.4" stroke="#ffffff" fill="none" stroke-width="1.25" shape-rendering="geometricPrecision"/>
<line x1="516.0" y1="118.5" x2="535.0" y2="118.5" stroke="#ff0000" stroke-width="1"/>
<line x1="525.5" y1="109.0" x2="525.5" y2="128.0" stroke="#ff0000" stroke-width="1"/>
<circle cx="525.5" cy="196.5" r="5.4" stroke="#ffffff" fill="none" stroke-width="1.25" shape-rendering="geometricPrecision"/>
<line x1="516.0" y1="196.5" x2="535.0" y2="196.5" stroke="#ff0000" stroke-width="1"/>
<line x1="525.5" y1="187.0" x2="525.5" y2="206.0" stroke="#ff0000" stroke-width="1"/>
<line x1="516.0" y1="274.5" x2="535.0" y2="274.5" stroke="#ff0000" stroke-width="1"/>
<line x1="525.5" y1="265.0" x2="525.5" y2="284.0" stroke="#ff0000" stroke-width="1"/>
<circle cx="707.5" cy="118.5" r="5.4" stroke="#ffffff" fill="none" stroke-width="1.25" shape-rendering="geometricPrecision"/>
<line x1="698.0" y1="118.5" x2="717.0" y2="118.5" stroke="#ff0000" stroke-width="1"/>
<line x1="707.5" y1="109.0" x2="707.5" y2="128.0" stroke="#ff0000" stroke-width="1"/>
<circle cx="707.5" cy="196.5" r="5.4" stroke="#ffffff" fill="none" stroke-width="1.25" shape-rendering="geometricPrecision"/>
<line x1="698.0" y1="196.5" x2="717.0" y2="196.5" stroke="#ff0000" stroke-width="1"/>
<line x1="707.5" y1="187.0" x2="707.5" y2="206.0" stroke="#ff0000" stroke-width="1"/>
<circle cx="707.5" cy="274.5" r="5.4" stroke="#ffffff" fill="none" stroke-width="1.25" shape-rendering="geometricPrecision"/>
<line x1="698.0" y1="274.5" x2="717.0" y2="274.5" stroke="#ff0000" stroke-width="1"/>
<line x1="707.5" y1="265.0" x2="707.5" y2="284.0" stroke="#ff0000" stroke-width="1"/>
<path d="M557.5 188.5 L557.5 136.5 A7.2 7.2 0 0 1 571.9 136.5 L571.9 188.5 A7.2 7.2 0 0 1 557.5 188.5" stroke="#ffffff" fill="none" stroke-width="1"/>
<circle cx="564.5" cy="136.5" r="7.2" stroke="#ffffff" fill="none" stroke-width="1"/>
<circle cx="564.5" cy="188.5" r="7.2" stroke="#ffffff" fill="none" stroke-width="1"/>
<path d="M562.5 177.5 L562.5 148 A2 2 0 0 1 566.5 148 L566.5 177.5 Z" stroke="#ffffff" fill="none" stroke-width="1"/>
<circle cx="564.5" cy="136.5" r="2.3" stroke="#00ffff" fill="none" stroke-width="1.25" shape-rendering="geometricPrecision"/>
<circle cx="564.5" cy="188.5" r="2.3" stroke="#00ffff" fill="none" stroke-width="1.25" shape-rendering="geometricPrecision"/>
<line x1="552" y1="136.5" x2="576.5" y2="136.5" stroke="#ff0000" stroke-width="1"/>
<line x1="552" y1="188.5" x2="576.5" y2="188.5" stroke="#ff0000" stroke-width="1"/>
<line x1="564.5" y1="124" x2="564.5" y2="201" stroke="#ff0000" stroke-width="1" stroke-dasharray="14 2 3 2"/>
<circle cx="594.5" cy="135.5" r="2.3" stroke="#00ffff" fill="none" stroke-width="1.25" shape-rendering="geometricPrecision"/>
<line x1="589" y1="135.5" x2="600" y2="135.5" stroke="#ff0000" stroke-width="1"/>
<line x1="594.5" y1="130" x2="594.5" y2="141" stroke="#ff0000" stroke-width="1"/>
<circle cx="594.5" cy="179.5" r="2.3" stroke="#00ffff" fill="none" stroke-width="1.25" shape-rendering="geometricPrecision"/>
<line x1="589" y1="179.5" x2="600" y2="179.5" stroke="#ff0000" stroke-width="1"/>
<line x1="594.5" y1="174" x2="594.5" y2="185" stroke="#ff0000" stroke-width="1"/>
<path d="M616.5 145.5 A12 12 0 0 0 616.5 169.5" stroke="#ffffff" fill="none" stroke-width="1"/>
<path d="M616.5 126.5 A31 31 0 0 1 621.5 188.5 L616.5 188.5" stroke="#ffffff" fill="none" stroke-width="1"/>
<path d="M616.5 210.5 A29 29 0 0 1 616.5 268.5" stroke="#ffffff" fill="none" stroke-width="1"/>
<path d="M616.5 116.0 A41.5 41.5 0 0 1 646.5 186.0 Q630.5 195.5 636.0 201.5 A42.5 42.5 0 0 1 647.5 269.5 Q640.5 276.5 645.5 279.5" stroke="#ffffff" fill="none" stroke-width="1"/>
<path d="M616.5 201.0 A38.5 38.5 0 0 1 616.5 278.0" stroke="#ff00ff" fill="none" stroke-width="1" stroke-dasharray="6 2"/>
<circle cx="645.5" cy="223.0" r="1.5" stroke="#ff00ff" fill="#ff00ff" stroke-width="1.25" shape-rendering="geometricPrecision"/>
<line x1="642.5" y1="220.0" x2="648.5" y2="226.0" stroke="#ff0000" stroke-width="1" stroke-dasharray="1 1"/>
<circle cx="645.5" cy="256.0" r="1.5" stroke="#ff00ff" fill="#ff00ff" stroke-width="1.25" shape-rendering="geometricPrecision"/>
<line x1="642.5" y1="253.0" x2="648.5" y2="259.0" stroke="#ff0000" stroke-width="1" stroke-dasharray="1 1"/>
<line x1="612.5" y1="206.0" x2="619.5" y2="206.0" stroke="#ff00ff" stroke-width="1"/>
<path d="M615.5 204.0 L618.5 206.0 L615.5 208.0 Z" stroke="#ff00ff" fill="#ff00ff" stroke-width="1"/>
<line x1="612.5" y1="273.0" x2="619.5" y2="273.0" stroke="#ff00ff" stroke-width="1"/>
<path d="M615.5 271.0 L618.5 273.0 L615.5 275.0 Z" stroke="#ff00ff" fill="#ff00ff" stroke-width="1"/>
<line x1="616.5" y1="88.5" x2="616.5" y2="341.5" stroke="#ff0000" stroke-width="1" stroke-dasharray="12 3 4 3 120 3 4 3 27 3 4 3 27 3 4 3 27 3 4 3"/>
<line x1="616.5" y1="110" x2="616.5" y2="227" stroke="#ff0000" stroke-width="1"/>
<line x1="580" y1="157.5" x2="653" y2="157.5" stroke="#ff0000" stroke-width="1" stroke-dasharray="27 3 4 3"/>
<line x1="475" y1="239.5" x2="754" y2="239.5" stroke="#ff0000" stroke-width="1" stroke-dasharray="27 3 4 3"/>
<line x1="511" y1="305.5" x2="654" y2="305.5" stroke="#ff0000" stroke-width="1" stroke-dasharray="27 3 4 3"/>
<circle cx="602.3" cy="49" r="4.5" stroke="#00ffff" fill="none" stroke-width="1.25" shape-rendering="geometricPrecision"/>
<text x="602.3" y="51.6" font-size="7" fill="#00ff00" stroke="#00ff00" stroke-width="0.35" text-anchor="middle" font-weight="bold" class="la" textLength="4.4" lengthAdjust="spacingAndGlyphs">14</text>
<line x1="600.5" y1="53" x2="566.5" y2="134.5" stroke="#00ffff" stroke-width="1"/>
<path d="M788.5 88.5 L860.5 88.5 L860.5 176.5 L788.5 176.5 Z" stroke="#ff00ff" fill="none" stroke-width="1" stroke-dasharray="11 3 1 3 1 3"/>
<circle cx="838.5" cy="103.7" r="4.3" stroke="#00ffff" fill="none" stroke-width="1.25" shape-rendering="geometricPrecision"/>
<rect x="836.5" y="100.7" width="4" height="6" fill="#00ff00" stroke="none"/>
<text x="838.5" y="105.7" font-size="4" fill="#003000" stroke="#003000" stroke-width="0" text-anchor="middle" font-weight="bold" class="la">20</text>
<line x1="834.5" y1="105.2" x2="804.8" y2="116.2" stroke="#00ffff" stroke-width="1"/>
<circle cx="838.5" cy="123.9" r="4.3" stroke="#00ffff" fill="none" stroke-width="1.25" shape-rendering="geometricPrecision"/>
<rect x="836.5" y="120.9" width="4" height="6" fill="#00ff00" stroke="none"/>
<text x="838.5" y="125.9" font-size="4" fill="#003000" stroke="#003000" stroke-width="0" text-anchor="middle" font-weight="bold" class="la">21</text>
<line x1="834.5" y1="125.4" x2="804.8" y2="131.3" stroke="#00ffff" stroke-width="1"/>
<circle cx="838.5" cy="140.4" r="4.3" stroke="#00ffff" fill="none" stroke-width="1.25" shape-rendering="geometricPrecision"/>
<rect x="836.5" y="137.4" width="4" height="6" fill="#00ff00" stroke="none"/>
<text x="838.5" y="142.4" font-size="4" fill="#003000" stroke="#003000" stroke-width="0" text-anchor="middle" font-weight="bold" class="la">22</text>
<line x1="834.5" y1="141.9" x2="805.7" y2="148" stroke="#00ffff" stroke-width="1"/>
<circle cx="838.5" cy="157.9" r="4.3" stroke="#00ffff" fill="none" stroke-width="1.25" shape-rendering="geometricPrecision"/>
<rect x="836.5" y="154.9" width="4" height="6" fill="#00ff00" stroke="none"/>
<text x="838.5" y="159.9" font-size="4" fill="#003000" stroke="#003000" stroke-width="0" text-anchor="middle" font-weight="bold" class="la">23</text>
<line x1="834.5" y1="159.4" x2="805.7" y2="164" stroke="#00ffff" stroke-width="1"/>
<path d="M116.5 617 L116.5 432.5 L126.5 432.5 L126.5 458.5 L413.5 458.5 L413.5 484.5" stroke="#ffffff" fill="none" stroke-width="1"/>
<path d="M404.5 484.5 L404.5 466.5 L127 466.5 Q124.5 466.5 124.5 469 L124.5 604 Q124.5 606.5 127 606.5 L305 606.5" stroke="#ffffff" fill="none" stroke-width="1"/>
<path d="M126.5 617 L126.5 614.5 L305 614.5" stroke="#ffffff" fill="none" stroke-width="1"/>
<line x1="226.5" y1="467" x2="226.5" y2="606" stroke="#ffffff" stroke-width="1"/>
<line x1="270.5" y1="467" x2="270.5" y2="606" stroke="#ffffff" stroke-width="1"/>
<line x1="278.5" y1="467" x2="278.5" y2="606" stroke="#ffffff" stroke-width="1"/>
<path d="M413.5 484.5 C405 485 395 487.5 383 487.5 C368 487.5 352 482 333 481.5 C318 481 311 484 308 492 C305.5 500 305 515 304.5 530 C304.5 545 308 570 307.5 585 C307 598 305 605 305 614.5" stroke="#00ffff" fill="none" stroke-width="1"/>
<line x1="299.5" y1="455" x2="299.5" y2="620" stroke="#ff0000" stroke-width="1" stroke-dasharray="27 3 4 3"/>
<line x1="366.5" y1="454.5" x2="366.5" y2="491.5" stroke="#ff0000" stroke-width="1" stroke-dasharray="10 3"/>
<line x1="122" y1="536.5" x2="321" y2="536.5" stroke="#ff0000" stroke-width="1" stroke-dasharray="27 3 4 3"/>
<path d="M116.5 617 L126.5 617 L126.5 640.5 L116.5 640.5 Z" fill="url(#hb)" stroke="none"/>
<line x1="116" y1="617.5" x2="127" y2="617.5" stroke="#00ffff" stroke-width="1" stroke-dasharray="2 2"/>
<line x1="116" y1="640.5" x2="127" y2="640.5" stroke="#00ffff" stroke-width="1" stroke-dasharray="2 2"/>
<line x1="116.5" y1="617" x2="116.5" y2="640" stroke="#ffffff" stroke-width="1" stroke-dasharray="3 2"/>
<line x1="126.5" y1="617" x2="126.5" y2="640" stroke="#ffffff" stroke-width="1" stroke-dasharray="3 2"/>
<path d="M116.5 440.0 L101.0 440.0 L99.5 441.5 L99.5 449.5 L101.0 451.0 L116.5 451.0" stroke="#ffffff" fill="none" stroke-width="1"/>
<line x1="101.0" y1="441.5" x2="116.5" y2="441.5" stroke="#00ffff" stroke-width="1"/>
<line x1="101.0" y1="449.5" x2="116.5" y2="449.5" stroke="#00ffff" stroke-width="1"/>
<rect x="126.5" y="436.0" width="2" height="19" stroke="#ffffff" fill="#000" stroke-width="1"/>
<path d="M130.5 437.0 L140 437.0 L141.5 438.5 L141.5 452.5 L140 454.0 L130.5 454.0 Z" stroke="#ffffff" fill="none" stroke-width="1"/>
<path d="M141.5 443.0 L136 443.0 Q134.5 445.5 136 448.0 L141.5 448.0" stroke="#ff00ff" fill="none" stroke-width="1.6"/>
<line x1="127" y1="439.5" x2="128.5" y2="439.5" stroke="#ff00ff" stroke-width="1"/>
<line x1="127" y1="451.5" x2="128.5" y2="451.5" stroke="#ff00ff" stroke-width="1"/>
<line x1="95" y1="445.5" x2="146" y2="445.5" stroke="#ff0000" stroke-width="1"/>
<rect x="122" y="622.0" width="4.5" height="11" fill="#000" stroke="none"/>
<line x1="122" y1="622.0" x2="126.5" y2="622.0" stroke="#ffffff" stroke-width="1" stroke-dasharray="2 2"/>
<line x1="122" y1="633.0" x2="126.5" y2="633.0" stroke="#ffffff" stroke-width="1" stroke-dasharray="2 2"/>
<path d="M122 622.0 L101.0 622.0 L99.5 623.5 L99.5 631.5 L101.0 633.0 L122 633.0 Z" stroke="#ffffff" fill="#000" stroke-width="1"/>
<line x1="101.0" y1="623.5" x2="122" y2="623.5" stroke="#00ffff" stroke-width="1"/>
<line x1="101.0" y1="631.5" x2="122" y2="631.5" stroke="#00ffff" stroke-width="1"/>
<rect x="126.5" y="618.0" width="2" height="19" stroke="#ffffff" fill="#000" stroke-width="1"/>
<path d="M130.5 619.0 L140 619.0 L141.5 620.5 L141.5 634.5 L140 636.0 L130.5 636.0 Z" stroke="#ffffff" fill="none" stroke-width="1"/>
<path d="M141.5 625.0 L136 625.0 Q134.5 627.5 136 630.0 L141.5 630.0" stroke="#ff00ff" fill="none" stroke-width="1.6"/>
<line x1="127" y1="621.5" x2="128.5" y2="621.5" stroke="#ff00ff" stroke-width="1"/>
<line x1="127" y1="633.5" x2="128.5" y2="633.5" stroke="#ff00ff" stroke-width="1"/>
<line x1="95" y1="627.5" x2="146" y2="627.5" stroke="#ff0000" stroke-width="1"/>
<path d="M221.5 396 L221.5 371 Q225 367 232 367.5 Q240 369 246 373 L250.5 374.5 L250.5 378 L279.5 378 L279.5 369 M262.5 372 Q268 367.5 275 367.5 Q283 369 290 374 Q298 376.5 304.5 372 L304.5 396" stroke="#ff00ff" fill="none" stroke-width="1" stroke-dasharray="10 1.5 1 1.5 1 1.5"/>
<path d="M221.5 396 Q223 406 231 410.5 M304.5 396 Q303 406 295.5 410.5" stroke="#ff00ff" fill="none" stroke-width="1" stroke-dasharray="10 1.5 1 1.5 1 1.5"/>
<line x1="231" y1="410.5" x2="296" y2="410.5" stroke="#ff00ff" stroke-width="1"/>
<line x1="262.5" y1="372" x2="262.5" y2="451" stroke="#ff00ff" stroke-width="1"/>
<path d="M231 410.5 L210.5 423.5 M295.5 410.5 L315.5 423.5" stroke="#ff00ff" fill="none" stroke-width="1" stroke-dasharray="10 1.5 1 1.5 1 1.5"/>
<path d="M210.5 423.5 L314.5 423.5 L314.5 428.5 L316.5 428.5 L316.5 433.5 L209.5 433.5 L209.5 428.5 L210.5 428.5 Z" stroke="#ff00ff" fill="none" stroke-width="1"/>
<line x1="209" y1="428.5" x2="317" y2="428.5" stroke="#ff00ff" stroke-width="1"/>
<line x1="229" y1="430.5" x2="297" y2="430.5" stroke="#ff00ff" stroke-width="1" stroke-dasharray="8 2 1 2 1 2"/>
<line x1="219.5" y1="417" x2="219.5" y2="433" stroke="#ff00ff" stroke-width="1"/>
<line x1="305.5" y1="417" x2="305.5" y2="433" stroke="#ff00ff" stroke-width="1"/>
<path d="M249 428 Q251 419 262.5 418.5 Q274 419 275.5 428" stroke="#ff00ff" fill="none" stroke-width="1" stroke-dasharray="10 1.5 1 1.5 1 1.5"/>
<path d="M227.5 433.5 L227.5 453 L214.5 453 L214.5 458" stroke="#ff00ff" fill="none" stroke-width="1"/>
<line x1="230.5" y1="433" x2="230.5" y2="458" stroke="#ff00ff" stroke-width="1" stroke-dasharray="10 1.5 1 1.5 1 1.5"/>
<path d="M331.5 436 L331.5 453 M334.5 433.5 L334.5 453 L346.5 453 L346.5 458" stroke="#ff00ff" fill="none" stroke-width="1"/>
<line x1="331.5" y1="436" x2="331.5" y2="458" stroke="#ff00ff" stroke-width="1" stroke-dasharray="10 1.5 1 1.5 1 1.5"/>
<line x1="316" y1="433.5" x2="335" y2="433.5" stroke="#ff00ff" stroke-width="1"/>
<line x1="300" y1="436.5" x2="332" y2="436.5" stroke="#ff00ff" stroke-width="1"/>
<line x1="220.5" y1="449" x2="220.5" y2="461" stroke="#ff00ff" stroke-width="1" stroke-dasharray="4 1 1 1"/>
<line x1="217.5" y1="455.5" x2="223.5" y2="455.5" stroke="#ff00ff" stroke-width="1"/>
<line x1="340.5" y1="449" x2="340.5" y2="461" stroke="#ff00ff" stroke-width="1" stroke-dasharray="4 1 1 1"/>
<line x1="337.5" y1="455.5" x2="343.5" y2="455.5" stroke="#ff00ff" stroke-width="1"/>
<rect x="257.5" y="426.5" width="10" height="23" stroke="#ff00ff" fill="none" stroke-width="1"/>
<line x1="260.5" y1="427" x2="260.5" y2="449" stroke="#ff00ff" stroke-width="1" stroke-dasharray="10 1.5 1 1.5 1 1.5"/>
<line x1="265.5" y1="427" x2="265.5" y2="449" stroke="#ff00ff" stroke-width="1" stroke-dasharray="10 1.5 1 1.5 1 1.5"/>
<rect x="252" y="437" width="4" height="11" fill="#ff00ff" stroke="none"/>
<rect x="267" y="434" width="6" height="13" fill="#ff00ff" stroke="none"/>
<rect x="324" y="439" width="4" height="8" fill="#ff00ff" stroke="none"/>
<line x1="273" y1="439.5" x2="325" y2="439.5" stroke="#ff00ff" stroke-width="1" stroke-dasharray="10 1.5 1 1.5 1 1.5"/>
<line x1="273" y1="446.5" x2="325" y2="446.5" stroke="#ff00ff" stroke-width="1" stroke-dasharray="10 1.5 1 1.5 1 1.5"/>
<rect x="294.5" y="438.5" width="8.5" height="14.5" stroke="#ff00ff" fill="none" stroke-width="1"/>
<line x1="297.5" y1="439" x2="297.5" y2="453" stroke="#ff00ff" stroke-width="1"/>
<line x1="300.5" y1="439" x2="300.5" y2="453" stroke="#ff00ff" stroke-width="1"/>
<rect x="276.5" y="452.5" width="46" height="6" stroke="#ff00ff" fill="none" stroke-width="1"/>
<line x1="279.5" y1="453" x2="279.5" y2="458" stroke="#ff00ff" stroke-width="1"/>
<line x1="320.5" y1="453" x2="320.5" y2="458" stroke="#ff00ff" stroke-width="1"/>
<circle cx="297" cy="455.5" r="2" stroke="#ff00ff" fill="#ff00ff" stroke-width="1.25" shape-rendering="geometricPrecision"/>
<circle cx="305" cy="448.5" r="2" stroke="#ff00ff" fill="none" stroke-width="1.25" shape-rendering="geometricPrecision"/>
<line x1="308" y1="455.5" x2="316" y2="455.5" stroke="#ff00ff" stroke-width="1"/>
<line x1="312" y1="452" x2="312" y2="459" stroke="#ff00ff" stroke-width="1"/>
<line x1="214" y1="458.5" x2="347" y2="458.5" stroke="#ff00ff" stroke-width="1" stroke-dasharray="5 2 1 2"/>
<text x="653.5" y="371" font-size="11" fill="#00ff00" stroke="#00ff00" stroke-width="0.35" text-anchor="middle" font-weight="normal" class="la" textLength="8" lengthAdjust="spacingAndGlyphs">16</text>
<text x="664" y="371" font-size="10" fill="#00ff00" stroke="#00ff00" stroke-width="0.35" text-anchor="start" font-weight="normal" class="la" textLength="38.5" lengthAdjust="spacingAndGlyphs">ZM-BM-M10X20</text>
<text x="707.2" y="371" font-size="9" fill="#00ff00" stroke="#00ff00" stroke-width="0.35" text-anchor="start" font-weight="bold" class="cj" textLength="16.8" lengthAdjust="spacingAndGlyphs">六角螺栓</text>
<text x="733.7" y="371" font-size="10" fill="#00ff00" stroke="#00ff00" stroke-width="0.35" text-anchor="start" font-weight="normal" class="la" textLength="26.3" lengthAdjust="spacingAndGlyphs">M10x20</text>
<text x="848" y="371" font-size="11" fill="#00ff00" stroke="#00ff00" stroke-width="0.35" text-anchor="middle" font-weight="normal" class="la" textLength="3.5" lengthAdjust="spacingAndGlyphs">4</text>
<text x="653.5" y="383" font-size="11" fill="#00ff00" stroke="#00ff00" stroke-width="0.35" text-anchor="middle" font-weight="normal" class="la" textLength="8" lengthAdjust="spacingAndGlyphs">15</text>
<text x="664" y="383" font-size="10" fill="#00ff00" stroke="#00ff00" stroke-width="0.35" text-anchor="start" font-weight="normal" class="la" textLength="38.5" lengthAdjust="spacingAndGlyphs">ZPO0331130</text>
<text x="707.2" y="383" font-size="9" fill="#00ff00" stroke="#00ff00" stroke-width="0.35" text-anchor="start" font-weight="bold" class="cj" textLength="24.8" lengthAdjust="spacingAndGlyphs">O型密封圈</text>
<text x="746.7" y="383" font-size="10" fill="#00ff00" stroke="#00ff00" stroke-width="0.35" text-anchor="start" font-weight="normal" class="la" textLength="27.6" lengthAdjust="spacingAndGlyphs">130X3.1</text>
<text x="848" y="383" font-size="11" fill="#00ff00" stroke="#00ff00" stroke-width="0.35" text-anchor="middle" font-weight="normal" class="la" textLength="3.5" lengthAdjust="spacingAndGlyphs">1</text>
<text x="894.7" y="383" font-size="9" fill="#00ff00" stroke="#00ff00" stroke-width="0.35" text-anchor="start" font-weight="bold" class="cj" textLength="25.0" lengthAdjust="spacingAndGlyphs">规格124.5</text>
<text x="653.5" y="396" font-size="11" fill="#00ff00" stroke="#00ff00" stroke-width="0.35" text-anchor="middle" font-weight="normal" class="la" textLength="8" lengthAdjust="spacingAndGlyphs">14</text>
<text x="664" y="396" font-size="10" fill="#00ff00" stroke="#00ff00" stroke-width="0.35" text-anchor="start" font-weight="normal" class="la" textLength="38.5" lengthAdjust="spacingAndGlyphs">1MHM316.3X100</text>
<text x="707.2" y="396" font-size="9" fill="#00ff00" stroke="#00ff00" stroke-width="0.35" text-anchor="start" font-weight="bold" class="cj" textLength="13.8" lengthAdjust="spacingAndGlyphs">液位计</text>
<text x="729.5" y="396" font-size="10" fill="#00ff00" stroke="#00ff00" stroke-width="0.35" text-anchor="start" font-weight="normal" class="la" textLength="18.5" lengthAdjust="spacingAndGlyphs">H100</text>
<text x="848" y="396" font-size="11" fill="#00ff00" stroke="#00ff00" stroke-width="0.35" text-anchor="middle" font-weight="normal" class="la" textLength="3.5" lengthAdjust="spacingAndGlyphs">1</text>
<text x="894.7" y="396" font-size="9" fill="#00ff00" stroke="#00ff00" stroke-width="0.35" text-anchor="start" font-weight="bold" class="cj" textLength="20.0" lengthAdjust="spacingAndGlyphs">规格代号</text>
<text x="653.5" y="409" font-size="11" fill="#00ff00" stroke="#00ff00" stroke-width="0.35" text-anchor="middle" font-weight="normal" class="la" textLength="8" lengthAdjust="spacingAndGlyphs">13</text>
<text x="664" y="409" font-size="10" fill="#00ff00" stroke="#00ff00" stroke-width="0.35" text-anchor="start" font-weight="normal" class="la" textLength="38.5" lengthAdjust="spacingAndGlyphs">ZM-MSYM16</text>
<text x="707.2" y="409" font-size="9" fill="#00ff00" stroke="#00ff00" stroke-width="0.35" text-anchor="start" font-weight="bold" class="cj" textLength="13.0" lengthAdjust="spacingAndGlyphs">弹簧垫圈</text>
<text x="729.5" y="409" font-size="10" fill="#00ff00" stroke="#00ff00" stroke-width="0.35" text-anchor="start" font-weight="normal" class="la" textLength="13.5" lengthAdjust="spacingAndGlyphs">φ16</text>
<text x="848" y="409" font-size="11" fill="#00ff00" stroke="#00ff00" stroke-width="0.35" text-anchor="middle" font-weight="normal" class="la" textLength="3.5" lengthAdjust="spacingAndGlyphs">1</text>
<text x="653.5" y="421" font-size="11" fill="#00ff00" stroke="#00ff00" stroke-width="0.35" text-anchor="middle" font-weight="normal" class="la" textLength="8" lengthAdjust="spacingAndGlyphs">12</text>
<text x="664" y="421" font-size="10" fill="#00ff00" stroke="#00ff00" stroke-width="0.35" text-anchor="start" font-weight="normal" class="la" textLength="38.5" lengthAdjust="spacingAndGlyphs">ZM-MIYM6</text>
<text x="707.2" y="421" font-size="9" fill="#00ff00" stroke="#00ff00" stroke-width="0.35" text-anchor="start" font-weight="bold" class="cj" textLength="9.7" lengthAdjust="spacingAndGlyphs">平垫圈</text>
<text x="726.5" y="421" font-size="10" fill="#00ff00" stroke="#00ff00" stroke-width="0.35" text-anchor="start" font-weight="normal" class="la" textLength="8.9" lengthAdjust="spacingAndGlyphs">φ6</text>
<text x="848" y="421" font-size="11" fill="#00ff00" stroke="#00ff00" stroke-width="0.35" text-anchor="middle" font-weight="normal" class="la" textLength="8" lengthAdjust="spacingAndGlyphs">10</text>
<text x="653.5" y="434" font-size="11" fill="#00ff00" stroke="#00ff00" stroke-width="0.35" text-anchor="middle" font-weight="normal" class="la" textLength="8" lengthAdjust="spacingAndGlyphs">11</text>
<text x="664" y="434" font-size="10" fill="#00ff00" stroke="#00ff00" stroke-width="0.35" text-anchor="start" font-weight="normal" class="la" textLength="38.5" lengthAdjust="spacingAndGlyphs">ZM-MSYM6</text>
<text x="707.2" y="434" font-size="9" fill="#00ff00" stroke="#00ff00" stroke-width="0.35" text-anchor="start" font-weight="bold" class="cj" textLength="13.0" lengthAdjust="spacingAndGlyphs">弹簧垫圈</text>
<text x="729.5" y="434" font-size="10" fill="#00ff00" stroke="#00ff00" stroke-width="0.35" text-anchor="start" font-weight="normal" class="la" textLength="8.5" lengthAdjust="spacingAndGlyphs">φ6</text>
<text x="848" y="434" font-size="11" fill="#00ff00" stroke="#00ff00" stroke-width="0.35" text-anchor="middle" font-weight="normal" class="la" textLength="8" lengthAdjust="spacingAndGlyphs">10</text>
<text x="653.5" y="447" font-size="11" fill="#00ff00" stroke="#00ff00" stroke-width="0.35" text-anchor="middle" font-weight="normal" class="la" textLength="8" lengthAdjust="spacingAndGlyphs">10</text>
<text x="664" y="447" font-size="10" fill="#00ff00" stroke="#00ff00" stroke-width="0.35" text-anchor="start" font-weight="normal" class="la" textLength="38.5" lengthAdjust="spacingAndGlyphs">ZM-BH-M6X16</text>
<text x="707.2" y="447" font-size="9" fill="#00ff00" stroke="#00ff00" stroke-width="0.35" text-anchor="start" font-weight="bold" class="cj" textLength="16.8" lengthAdjust="spacingAndGlyphs">六角螺栓</text>
<text x="733.7" y="447" font-size="10" fill="#00ff00" stroke="#00ff00" stroke-width="0.35" text-anchor="start" font-weight="normal" class="la" textLength="21.5" lengthAdjust="spacingAndGlyphs">M6x16</text>
<text x="848" y="447" font-size="11" fill="#00ff00" stroke="#00ff00" stroke-width="0.35" text-anchor="middle" font-weight="normal" class="la" textLength="8" lengthAdjust="spacingAndGlyphs">10</text>
<text x="653.5" y="459" font-size="11" fill="#00ff00" stroke="#00ff00" stroke-width="0.35" text-anchor="middle" font-weight="normal" class="la" textLength="4.5" lengthAdjust="spacingAndGlyphs">9</text>
<text x="664" y="459" font-size="10" fill="#00ff00" stroke="#00ff00" stroke-width="0.35" text-anchor="start" font-weight="normal" class="la" textLength="38.5" lengthAdjust="spacingAndGlyphs">ZM-MIYM16</text>
<text x="707.2" y="459" font-size="9" fill="#00ff00" stroke="#00ff00" stroke-width="0.35" text-anchor="start" font-weight="bold" class="cj" textLength="9.7" lengthAdjust="spacingAndGlyphs">平垫圈</text>
<text x="726.5" y="459" font-size="10" fill="#00ff00" stroke="#00ff00" stroke-width="0.35" text-anchor="start" font-weight="normal" class="la" textLength="13.2" lengthAdjust="spacingAndGlyphs">φ16</text>
<text x="848" y="459" font-size="11" fill="#00ff00" stroke="#00ff00" stroke-width="0.35" text-anchor="middle" font-weight="normal" class="la" textLength="3.5" lengthAdjust="spacingAndGlyphs">6</text>
<text x="653.5" y="472" font-size="11" fill="#00ff00" stroke="#00ff00" stroke-width="0.35" text-anchor="middle" font-weight="normal" class="la" textLength="4.5" lengthAdjust="spacingAndGlyphs">8</text>
<text x="664" y="472" font-size="10" fill="#00ff00" stroke="#00ff00" stroke-width="0.35" text-anchor="start" font-weight="normal" class="la" textLength="38.5" lengthAdjust="spacingAndGlyphs">ZM-MSYM16</text>
<text x="707.2" y="472" font-size="9" fill="#00ff00" stroke="#00ff00" stroke-width="0.35" text-anchor="start" font-weight="bold" class="cj" textLength="13.0" lengthAdjust="spacingAndGlyphs">弹簧垫圈</text>
<text x="729.5" y="472" font-size="10" fill="#00ff00" stroke="#00ff00" stroke-width="0.35" text-anchor="start" font-weight="normal" class="la" textLength="13.5" lengthAdjust="spacingAndGlyphs">φ16</text>
<text x="848" y="472" font-size="11" fill="#00ff00" stroke="#00ff00" stroke-width="0.35" text-anchor="middle" font-weight="normal" class="la" textLength="3.5" lengthAdjust="spacingAndGlyphs">6</text>
<text x="653.5" y="484" font-size="11" fill="#00ff00" stroke="#00ff00" stroke-width="0.35" text-anchor="middle" font-weight="normal" class="la" textLength="4.5" lengthAdjust="spacingAndGlyphs">7</text>
<text x="664" y="484" font-size="10" fill="#00ff00" stroke="#00ff00" stroke-width="0.35" text-anchor="start" font-weight="normal" class="la" textLength="38.5" lengthAdjust="spacingAndGlyphs">ZM-CAPM16X50</text>
<text x="707.2" y="484" font-size="9" fill="#00ff00" stroke="#00ff00" stroke-width="0.35" text-anchor="start" font-weight="bold" class="cj" textLength="26.5" lengthAdjust="spacingAndGlyphs">内六角圆柱螺钉</text>
<text x="743.9" y="484" font-size="10" fill="#00ff00" stroke="#00ff00" stroke-width="0.35" text-anchor="start" font-weight="normal" class="la" textLength="27.1" lengthAdjust="spacingAndGlyphs">M16X50</text>
<text x="848" y="484" font-size="11" fill="#00ff00" stroke="#00ff00" stroke-width="0.35" text-anchor="middle" font-weight="normal" class="la" textLength="3.5" lengthAdjust="spacingAndGlyphs">6</text>
<text x="653.5" y="497" font-size="11" fill="#00ff00" stroke="#00ff00" stroke-width="0.35" text-anchor="middle" font-weight="normal" class="la" textLength="4.5" lengthAdjust="spacingAndGlyphs">6</text>
<text x="664" y="497" font-size="10" fill="#00ff00" stroke="#00ff00" stroke-width="0.35" text-anchor="start" font-weight="normal" class="la" textLength="38.5" lengthAdjust="spacingAndGlyphs">UA0006900A-01</text>
<text x="707.2" y="497" font-size="9" fill="#00ff00" stroke="#00ff00" stroke-width="0.35" text-anchor="start" font-weight="bold" class="cj" textLength="13.8" lengthAdjust="spacingAndGlyphs">工艺堵</text>
<text x="800.6" y="497" font-size="10" fill="#00ff00" stroke="#00ff00" stroke-width="0.35" text-anchor="start" font-weight="normal" class="la" textLength="22.4" lengthAdjust="spacingAndGlyphs">HT200</text>
<text x="848" y="497" font-size="11" fill="#00ff00" stroke="#00ff00" stroke-width="0.35" text-anchor="middle" font-weight="normal" class="la" textLength="3.5" lengthAdjust="spacingAndGlyphs">1</text>
<text x="653.5" y="510" font-size="11" fill="#00ff00" stroke="#00ff00" stroke-width="0.35" text-anchor="middle" font-weight="normal" class="la" textLength="4.5" lengthAdjust="spacingAndGlyphs">5</text>
<text x="664" y="510" font-size="10" fill="#00ff00" stroke="#00ff00" stroke-width="0.35" text-anchor="start" font-weight="normal" class="la" textLength="38.5" lengthAdjust="spacingAndGlyphs">UB05000008-01</text>
<text x="707.2" y="510" font-size="9" fill="#00ff00" stroke="#00ff00" stroke-width="0.35" text-anchor="start" font-weight="bold" class="cj" textLength="13.8" lengthAdjust="spacingAndGlyphs">电动机</text>
<text x="792.7" y="510" font-size="10" fill="#00ff00" stroke="#00ff00" stroke-width="0.35" text-anchor="start" font-weight="normal" class="la" textLength="32.6" lengthAdjust="spacingAndGlyphs">螺纹 M18X1.5</text>
<text x="848" y="510" font-size="11" fill="#00ff00" stroke="#00ff00" stroke-width="0.35" text-anchor="middle" font-weight="normal" class="la" textLength="3.5" lengthAdjust="spacingAndGlyphs">1</text>
<text x="653.5" y="522" font-size="11" fill="#00ff00" stroke="#00ff00" stroke-width="0.35" text-anchor="middle" font-weight="normal" class="la" textLength="4.5" lengthAdjust="spacingAndGlyphs">4</text>
<text x="664" y="522" font-size="10" fill="#00ff00" stroke="#00ff00" stroke-width="0.35" text-anchor="start" font-weight="normal" class="la" textLength="38.5" lengthAdjust="spacingAndGlyphs">UA0004200A-01</text>
<text x="707.2" y="522" font-size="9" fill="#00ff00" stroke="#00ff00" stroke-width="0.35" text-anchor="start" font-weight="bold" class="cj" textLength="9.7" lengthAdjust="spacingAndGlyphs">法兰</text>
<text x="795.2" y="522" font-size="10" fill="#00ff00" stroke="#00ff00" stroke-width="0.35" text-anchor="start" font-weight="normal" class="la" textLength="27.0" lengthAdjust="spacingAndGlyphs">钢管φ20</text>
<text x="848" y="522" font-size="11" fill="#00ff00" stroke="#00ff00" stroke-width="0.35" text-anchor="middle" font-weight="normal" class="la" textLength="3.5" lengthAdjust="spacingAndGlyphs">1</text>
<text x="653.5" y="535" font-size="11" fill="#00ff00" stroke="#00ff00" stroke-width="0.35" text-anchor="middle" font-weight="normal" class="la" textLength="4.5" lengthAdjust="spacingAndGlyphs">3</text>
<text x="664" y="535" font-size="10" fill="#00ff00" stroke="#00ff00" stroke-width="0.35" text-anchor="start" font-weight="normal" class="la" textLength="38.5" lengthAdjust="spacingAndGlyphs">UF14A05000-01</text>
<text x="707.2" y="535" font-size="9" fill="#00ff00" stroke="#00ff00" stroke-width="0.35" text-anchor="start" font-weight="bold" class="cj" textLength="16.8" lengthAdjust="spacingAndGlyphs">油箱盖板</text>
<text x="800.6" y="535" font-size="10" fill="#00ff00" stroke="#00ff00" stroke-width="0.35" text-anchor="start" font-weight="normal" class="la" textLength="22.4" lengthAdjust="spacingAndGlyphs">HT200</text>
<text x="848" y="535" font-size="11" fill="#00ff00" stroke="#00ff00" stroke-width="0.35" text-anchor="middle" font-weight="normal" class="la" textLength="3.5" lengthAdjust="spacingAndGlyphs">1</text>
<text x="653.5" y="547" font-size="11" fill="#00ff00" stroke="#00ff00" stroke-width="0.35" text-anchor="middle" font-weight="normal" class="la" textLength="4.5" lengthAdjust="spacingAndGlyphs">2</text>
<text x="664" y="547" font-size="10" fill="#00ff00" stroke="#00ff00" stroke-width="0.35" text-anchor="start" font-weight="normal" class="la" textLength="38.5" lengthAdjust="spacingAndGlyphs">U0807540D1-01</text>
<text x="707.2" y="547" font-size="9" fill="#00ff00" stroke="#00ff00" stroke-width="0.35" text-anchor="start" font-weight="bold" class="cj" textLength="20.6" lengthAdjust="spacingAndGlyphs">滤油器组件</text>
<text x="792.7" y="547" font-size="10" fill="#00ff00" stroke="#00ff00" stroke-width="0.35" text-anchor="start" font-weight="normal" class="la" textLength="32.1" lengthAdjust="spacingAndGlyphs">钢板0.5-0.3</text>
<text x="848" y="547" font-size="11" fill="#00ff00" stroke="#00ff00" stroke-width="0.35" text-anchor="middle" font-weight="normal" class="la" textLength="3.5" lengthAdjust="spacingAndGlyphs">1</text>
<text x="653.5" y="560" font-size="11" fill="#00ff00" stroke="#00ff00" stroke-width="0.35" text-anchor="middle" font-weight="normal" class="la" textLength="4.5" lengthAdjust="spacingAndGlyphs">1</text>
<text x="664" y="560" font-size="10" fill="#00ff00" stroke="#00ff00" stroke-width="0.35" text-anchor="start" font-weight="normal" class="la" textLength="38.5" lengthAdjust="spacingAndGlyphs">U0113060D1-01</text>
<text x="707.2" y="560" font-size="9" fill="#00ff00" stroke="#00ff00" stroke-width="0.35" text-anchor="start" font-weight="bold" class="cj" textLength="13.8" lengthAdjust="spacingAndGlyphs">油箱体</text>
<text x="797" y="560" font-size="10" fill="#00ff00" stroke="#00ff00" stroke-width="0.35" text-anchor="start" font-weight="normal" class="la" textLength="25.2" lengthAdjust="spacingAndGlyphs">钢板3×5</text>
<text x="848" y="560" font-size="11" fill="#00ff00" stroke="#00ff00" stroke-width="0.35" text-anchor="middle" font-weight="normal" class="la" textLength="3.5" lengthAdjust="spacingAndGlyphs">1</text>
<text x="372.3" y="554" font-size="11" fill="#00ff00" stroke="#00ff00" stroke-width="0.35" text-anchor="middle" font-weight="normal" class="la" textLength="8.5" lengthAdjust="spacingAndGlyphs">23</text>
<text x="382" y="554" font-size="10" fill="#00ff00" stroke="#00ff00" stroke-width="0.35" text-anchor="start" font-weight="normal" class="la" textLength="40.5" lengthAdjust="spacingAndGlyphs">ZM-BH-M6X16</text>
<text x="425.5" y="554" font-size="9" fill="#00ff00" stroke="#00ff00" stroke-width="0.35" text-anchor="start" font-weight="bold" class="cj" textLength="17.3" lengthAdjust="spacingAndGlyphs">六角螺栓</text>
<text x="452" y="554" font-size="10" fill="#00ff00" stroke="#00ff00" stroke-width="0.35" text-anchor="start" font-weight="normal" class="la" textLength="22" lengthAdjust="spacingAndGlyphs">M6x16</text>
<text x="566.5" y="554" font-size="11" fill="#00ff00" stroke="#00ff00" stroke-width="0.35" text-anchor="middle" font-weight="normal" class="la" textLength="3.5" lengthAdjust="spacingAndGlyphs">2</text>
<text x="372.3" y="566" font-size="11" fill="#00ff00" stroke="#00ff00" stroke-width="0.35" text-anchor="middle" font-weight="normal" class="la" textLength="8.5" lengthAdjust="spacingAndGlyphs">22</text>
<text x="382" y="566" font-size="10" fill="#00ff00" stroke="#00ff00" stroke-width="0.35" text-anchor="start" font-weight="normal" class="la" textLength="40.5" lengthAdjust="spacingAndGlyphs">ZM-SETM5X25</text>
<text x="425.5" y="566" font-size="9" fill="#00ff00" stroke="#00ff00" stroke-width="0.35" text-anchor="start" font-weight="bold" class="cj" textLength="30.5" lengthAdjust="spacingAndGlyphs">内六角紧定螺钉</text>
<text x="465.6" y="566" font-size="10" fill="#00ff00" stroke="#00ff00" stroke-width="0.35" text-anchor="start" font-weight="normal" class="la" textLength="23.6" lengthAdjust="spacingAndGlyphs">M5X25</text>
<text x="566.5" y="566" font-size="11" fill="#00ff00" stroke="#00ff00" stroke-width="0.35" text-anchor="middle" font-weight="normal" class="la" textLength="3.5" lengthAdjust="spacingAndGlyphs">2</text>
<text x="372.3" y="579" font-size="11" fill="#00ff00" stroke="#00ff00" stroke-width="0.35" text-anchor="middle" font-weight="normal" class="la" textLength="8.5" lengthAdjust="spacingAndGlyphs">21</text>
<text x="382" y="579" font-size="10" fill="#00ff00" stroke="#00ff00" stroke-width="0.35" text-anchor="start" font-weight="normal" class="la" textLength="40.5" lengthAdjust="spacingAndGlyphs">ZM-BH-M6X10</text>
<text x="425.5" y="579" font-size="9" fill="#00ff00" stroke="#00ff00" stroke-width="0.35" text-anchor="start" font-weight="bold" class="cj" textLength="17.3" lengthAdjust="spacingAndGlyphs">六角螺栓</text>
<text x="452" y="579" font-size="10" fill="#00ff00" stroke="#00ff00" stroke-width="0.35" text-anchor="start" font-weight="normal" class="la" textLength="22" lengthAdjust="spacingAndGlyphs">M6x10</text>
<text x="566.5" y="579" font-size="11" fill="#00ff00" stroke="#00ff00" stroke-width="0.35" text-anchor="middle" font-weight="normal" class="la" textLength="3.5" lengthAdjust="spacingAndGlyphs">4</text>
<text x="372.3" y="592" font-size="11" fill="#00ff00" stroke="#00ff00" stroke-width="0.35" text-anchor="middle" font-weight="normal" class="la" textLength="8.5" lengthAdjust="spacingAndGlyphs">20</text>
<text x="382" y="592" font-size="10" fill="#00ff00" stroke="#00ff00" stroke-width="0.35" text-anchor="start" font-weight="normal" class="la" textLength="40.5" lengthAdjust="spacingAndGlyphs">ZM-CAPM6X10</text>
<text x="425.5" y="592" font-size="9" fill="#00ff00" stroke="#00ff00" stroke-width="0.35" text-anchor="start" font-weight="bold" class="cj" textLength="27.1" lengthAdjust="spacingAndGlyphs">内六角圆柱螺钉</text>
<text x="462.7" y="592" font-size="10" fill="#00ff00" stroke="#00ff00" stroke-width="0.35" text-anchor="start" font-weight="normal" class="la" textLength="22.3" lengthAdjust="spacingAndGlyphs">M6X10</text>
<text x="566.5" y="592" font-size="11" fill="#00ff00" stroke="#00ff00" stroke-width="0.35" text-anchor="middle" font-weight="normal" class="la" textLength="3.5" lengthAdjust="spacingAndGlyphs">4</text>
<text x="372.3" y="604" font-size="11" fill="#00ff00" stroke="#00ff00" stroke-width="0.35" text-anchor="middle" font-weight="normal" class="la" textLength="8.5" lengthAdjust="spacingAndGlyphs">19</text>
<text x="382" y="604" font-size="10" fill="#00ff00" stroke="#00ff00" stroke-width="0.35" text-anchor="start" font-weight="normal" class="la" textLength="40.5" lengthAdjust="spacingAndGlyphs">ZM-BH-M10X16</text>
<text x="425.5" y="604" font-size="9" fill="#00ff00" stroke="#00ff00" stroke-width="0.35" text-anchor="start" font-weight="bold" class="cj" textLength="17.3" lengthAdjust="spacingAndGlyphs">六角螺栓</text>
<text x="452" y="604" font-size="10" fill="#00ff00" stroke="#00ff00" stroke-width="0.35" text-anchor="start" font-weight="normal" class="la" textLength="26.2" lengthAdjust="spacingAndGlyphs">M10x16</text>
<text x="566.5" y="604" font-size="11" fill="#00ff00" stroke="#00ff00" stroke-width="0.35" text-anchor="middle" font-weight="normal" class="la" textLength="3.5" lengthAdjust="spacingAndGlyphs">1</text>
<text x="372.3" y="617" font-size="11" fill="#00ff00" stroke="#00ff00" stroke-width="0.35" text-anchor="middle" font-weight="normal" class="la" textLength="8.5" lengthAdjust="spacingAndGlyphs">18</text>
<text x="382" y="617" font-size="10" fill="#00ff00" stroke="#00ff00" stroke-width="0.35" text-anchor="start" font-weight="normal" class="la" textLength="40.5" lengthAdjust="spacingAndGlyphs">ZP08.75X1.8</text>
<text x="425.5" y="617" font-size="9" fill="#00ff00" stroke="#00ff00" stroke-width="0.35" text-anchor="start" font-weight="bold" class="cj" textLength="20.5" lengthAdjust="spacingAndGlyphs">O型密封圈</text>
<text x="456.6" y="617" font-size="10" fill="#00ff00" stroke="#00ff00" stroke-width="0.35" text-anchor="start" font-weight="normal" class="la" textLength="36.8" lengthAdjust="spacingAndGlyphs">8.75内径X1.8</text>
<text x="566.5" y="617" font-size="11" fill="#00ff00" stroke="#00ff00" stroke-width="0.35" text-anchor="middle" font-weight="normal" class="la" textLength="3.5" lengthAdjust="spacingAndGlyphs">1</text>
<text x="612.7" y="617" font-size="9" fill="#00ff00" stroke="#00ff00" stroke-width="0.35" text-anchor="start" font-weight="bold" class="cj" textLength="24.3" lengthAdjust="spacingAndGlyphs">规格8.7</text>
<text x="372.3" y="629" font-size="11" fill="#00ff00" stroke="#00ff00" stroke-width="0.35" text-anchor="middle" font-weight="normal" class="la" textLength="8.5" lengthAdjust="spacingAndGlyphs">17</text>
<text x="382" y="629" font-size="10" fill="#00ff00" stroke="#00ff00" stroke-width="0.35" text-anchor="start" font-weight="normal" class="la" textLength="40.5" lengthAdjust="spacingAndGlyphs">ZM-MSYM10</text>
<text x="425.5" y="629" font-size="9" fill="#00ff00" stroke="#00ff00" stroke-width="0.35" text-anchor="start" font-weight="bold" class="cj" textLength="13.0" lengthAdjust="spacingAndGlyphs">弹簧垫圈</text>
<text x="448.7" y="629" font-size="10" fill="#00ff00" stroke="#00ff00" stroke-width="0.35" text-anchor="start" font-weight="normal" class="la" textLength="12.7" lengthAdjust="spacingAndGlyphs">φ10</text>
<text x="566.5" y="629" font-size="11" fill="#00ff00" stroke="#00ff00" stroke-width="0.35" text-anchor="middle" font-weight="normal" class="la" textLength="3.5" lengthAdjust="spacingAndGlyphs">4</text>
<text x="650.55" y="574.5" font-size="9" fill="#00ff00" stroke="#00ff00" stroke-width="0.45" text-anchor="middle" font-weight="bold" class="cj" textLength="7.7" lengthAdjust="spacingAndGlyphs">序号</text>
<text x="670.5" y="574.5" font-size="9" fill="#00ff00" stroke="#00ff00" stroke-width="0.45" text-anchor="middle" font-weight="bold" class="cj" textLength="4.0" lengthAdjust="spacingAndGlyphs">代</text>
<text x="690.0" y="574.5" font-size="9" fill="#00ff00" stroke="#00ff00" stroke-width="0.45" text-anchor="middle" font-weight="bold" class="cj" textLength="4" lengthAdjust="spacingAndGlyphs">号</text>
<text x="713.0" y="574.5" font-size="9" fill="#00ff00" stroke="#00ff00" stroke-width="0.45" text-anchor="middle" font-weight="bold" class="cj" textLength="4" lengthAdjust="spacingAndGlyphs">名</text>
<text x="733.0" y="574.5" font-size="9" fill="#00ff00" stroke="#00ff00" stroke-width="0.45" text-anchor="middle" font-weight="bold" class="cj" textLength="4" lengthAdjust="spacingAndGlyphs">称</text>
<text x="757.5" y="574.5" font-size="9" fill="#00ff00" stroke="#00ff00" stroke-width="0.45" text-anchor="middle" font-weight="bold" class="cj" textLength="4.0" lengthAdjust="spacingAndGlyphs">规</text>
<text x="777.5" y="574.5" font-size="9" fill="#00ff00" stroke="#00ff00" stroke-width="0.45" text-anchor="middle" font-weight="bold" class="cj" textLength="4.0" lengthAdjust="spacingAndGlyphs">格</text>
<text x="801.0" y="574.5" font-size="9" fill="#00ff00" stroke="#00ff00" stroke-width="0.45" text-anchor="middle" font-weight="bold" class="cj" textLength="4" lengthAdjust="spacingAndGlyphs">材</text>
<text x="820.0" y="574.5" font-size="9" fill="#00ff00" stroke="#00ff00" stroke-width="0.45" text-anchor="middle" font-weight="bold" class="cj" textLength="4" lengthAdjust="spacingAndGlyphs">料</text>
<text x="844.2" y="574.5" font-size="9" fill="#00ff00" stroke="#00ff00" stroke-width="0.45" text-anchor="middle" font-weight="bold" class="cj" textLength="21.0" lengthAdjust="spacingAndGlyphs">数量X单重</text>
<text x="867.75" y="574.5" font-size="9" fill="#00ff00" stroke="#00ff00" stroke-width="0.45" text-anchor="middle" font-weight="bold" class="cj" textLength="8.5" lengthAdjust="spacingAndGlyphs">单重</text>
<text x="882.5" y="574.5" font-size="9" fill="#00ff00" stroke="#00ff00" stroke-width="0.45" text-anchor="middle" font-weight="bold" class="cj" textLength="7" lengthAdjust="spacingAndGlyphs">页次</text>
<text x="900.0" y="574.5" font-size="9" fill="#00ff00" stroke="#00ff00" stroke-width="0.45" text-anchor="middle" font-weight="bold" class="cj" textLength="4" lengthAdjust="spacingAndGlyphs">备</text>
<text x="914.0" y="574.5" font-size="9" fill="#00ff00" stroke="#00ff00" stroke-width="0.45" text-anchor="middle" font-weight="bold" class="cj" textLength="4" lengthAdjust="spacingAndGlyphs">注</text>
<text x="369.35" y="645" font-size="9" fill="#00ff00" stroke="#00ff00" stroke-width="0.45" text-anchor="middle" font-weight="bold" class="cj" textLength="6.7" lengthAdjust="spacingAndGlyphs">序号</text>
<text x="389.0" y="645" font-size="9" fill="#00ff00" stroke="#00ff00" stroke-width="0.45" text-anchor="middle" font-weight="bold" class="cj" textLength="4" lengthAdjust="spacingAndGlyphs">代</text>
<text x="409.0" y="645" font-size="9" fill="#00ff00" stroke="#00ff00" stroke-width="0.45" text-anchor="middle" font-weight="bold" class="cj" textLength="4" lengthAdjust="spacingAndGlyphs">号</text>
<text x="432.25" y="645" font-size="9" fill="#00ff00" stroke="#00ff00" stroke-width="0.45" text-anchor="middle" font-weight="bold" class="cj" textLength="4.5" lengthAdjust="spacingAndGlyphs">名</text>
<text x="452.25" y="645" font-size="9" fill="#00ff00" stroke="#00ff00" stroke-width="0.45" text-anchor="middle" font-weight="bold" class="cj" textLength="4.5" lengthAdjust="spacingAndGlyphs">称</text>
<text x="476.25" y="645" font-size="9" fill="#00ff00" stroke="#00ff00" stroke-width="0.45" text-anchor="middle" font-weight="bold" class="cj" textLength="4.5" lengthAdjust="spacingAndGlyphs">规</text>
<text x="495.25" y="645" font-size="9" fill="#00ff00" stroke="#00ff00" stroke-width="0.45" text-anchor="middle" font-weight="bold" class="cj" textLength="4.5" lengthAdjust="spacingAndGlyphs">格</text>
<text x="519.0" y="645" font-size="9" fill="#00ff00" stroke="#00ff00" stroke-width="0.45" text-anchor="middle" font-weight="bold" class="cj" textLength="4" lengthAdjust="spacingAndGlyphs">材</text>
<text x="538.5" y="645" font-size="9" fill="#00ff00" stroke="#00ff00" stroke-width="0.45" text-anchor="middle" font-weight="bold" class="cj" textLength="4.0" lengthAdjust="spacingAndGlyphs">料</text>
<text x="563.1" y="645" font-size="9" fill="#00ff00" stroke="#00ff00" stroke-width="0.45" text-anchor="middle" font-weight="bold" class="cj" textLength="20.8" lengthAdjust="spacingAndGlyphs">数量X单重</text>
<text x="586.35" y="645" font-size="9" fill="#00ff00" stroke="#00ff00" stroke-width="0.45" text-anchor="middle" font-weight="bold" class="cj" textLength="6.3" lengthAdjust="spacingAndGlyphs">单重</text>
<text x="600.75" y="645" font-size="9" fill="#00ff00" stroke="#00ff00" stroke-width="0.45" text-anchor="middle" font-weight="bold" class="cj" textLength="7.5" lengthAdjust="spacingAndGlyphs">总重</text>
<text x="618.2" y="645" font-size="9" fill="#00ff00" stroke="#00ff00" stroke-width="0.45" text-anchor="middle" font-weight="bold" class="cj" textLength="4.0" lengthAdjust="spacingAndGlyphs">备</text>
<text x="632.2" y="645" font-size="9" fill="#00ff00" stroke="#00ff00" stroke-width="0.45" text-anchor="middle" font-weight="bold" class="cj" textLength="4.0" lengthAdjust="spacingAndGlyphs">注</text>
<text x="649.3" y="591" font-size="7" fill="#00ff00" stroke="#00ff00" stroke-width="0.35" text-anchor="start" font-weight="bold" class="cj" textLength="25.3" lengthAdjust="spacingAndGlyphs">第三角投影</text>
<text x="650" y="625" font-size="6" fill="#00ff00" stroke="#00ff00" stroke-width="0.35" text-anchor="start" font-weight="bold" class="cj" textLength="11" lengthAdjust="spacingAndGlyphs">设 计</text>
<text x="650" y="633" font-size="6" fill="#00ff00" stroke="#00ff00" stroke-width="0.35" text-anchor="start" font-weight="bold" class="cj" textLength="11" lengthAdjust="spacingAndGlyphs">校 对</text>
<text x="650" y="641" font-size="6" fill="#00ff00" stroke="#00ff00" stroke-width="0.35" text-anchor="start" font-weight="bold" class="cj" textLength="11" lengthAdjust="spacingAndGlyphs">审 核</text>
<text x="650" y="649" font-size="6" fill="#00ff00" stroke="#00ff00" stroke-width="0.35" text-anchor="start" font-weight="bold" class="cj" textLength="11" lengthAdjust="spacingAndGlyphs">批 准</text>
<text x="697" y="625" font-size="6" fill="#00ff00" stroke="#00ff00" stroke-width="0.35" text-anchor="start" font-weight="bold" class="cj" textLength="11.4" lengthAdjust="spacingAndGlyphs">工 艺</text>
<text x="697" y="633" font-size="6" fill="#00ff00" stroke="#00ff00" stroke-width="0.35" text-anchor="start" font-weight="bold" class="cj" textLength="11.4" lengthAdjust="spacingAndGlyphs">标准化</text>
<text x="697.4" y="649" font-size="6" fill="#00ff00" stroke="#00ff00" stroke-width="0.35" text-anchor="start" font-weight="bold" class="cj" textLength="10.2" lengthAdjust="spacingAndGlyphs">日 期</text>
<text x="717.7" y="650" font-size="6.5" fill="#00ff00" stroke="#00ff00" stroke-width="0.35" text-anchor="start" font-weight="bold" class="cj" textLength="19" lengthAdjust="spacingAndGlyphs">日 期</text>
<text x="746.5" y="622.5" font-size="14" fill="#00ff00" stroke="#00ff00" stroke-width="0" text-anchor="start" font-weight="normal" class="cj" textLength="81" lengthAdjust="spacing">图样名称</text>
<text x="743.5" y="645" font-size="9.5" fill="#00ff00" stroke="#00ff00" stroke-width="0.15" text-anchor="start" font-weight="normal" class="cj" textLength="85" lengthAdjust="spacingAndGlyphs">产品名称或材料标记</text>
<text x="841" y="645.5" font-size="10.5" fill="#00ff00" stroke="#00ff00" stroke-width="0" text-anchor="start" font-weight="normal" class="cj" textLength="80" lengthAdjust="spacingAndGlyphs">图样代号</text>
<text x="838" y="607.5" font-size="6" fill="#00ff00" stroke="#00ff00" stroke-width="0.35" text-anchor="start" font-weight="bold" class="cj" textLength="10.5" lengthAdjust="spacingAndGlyphs">阶段</text>
<text x="860.2" y="607.5" font-size="6" fill="#00ff00" stroke="#00ff00" stroke-width="0.35" text-anchor="start" font-weight="bold" class="cj" textLength="12.0" lengthAdjust="spacingAndGlyphs">标记</text>
<text x="884.2" y="607.5" font-size="6" fill="#00ff00" stroke="#00ff00" stroke-width="0.35" text-anchor="start" font-weight="bold" class="cj" textLength="11.8" lengthAdjust="spacingAndGlyphs">重量</text>
<text x="908" y="607.5" font-size="6" fill="#00ff00" stroke="#00ff00" stroke-width="0.35" text-anchor="start" font-weight="bold" class="cj" textLength="11.7" lengthAdjust="spacingAndGlyphs">比例</text>
<text x="835.2" y="620" font-size="8" fill="#00ff00" stroke="#00ff00" stroke-width="0.35" text-anchor="start" font-weight="normal" class="cj" textLength="18.8" lengthAdjust="spacingAndGlyphs">总数量</text>
<text x="857.7" y="620" font-size="8" fill="#00ff00" stroke="#00ff00" stroke-width="0.35" text-anchor="start" font-weight="normal" class="cj" textLength="20.0" lengthAdjust="spacingAndGlyphs">数量/台</text>
<text x="882.2" y="620" font-size="8" fill="#00ff00" stroke="#00ff00" stroke-width="0.35" text-anchor="start" font-weight="normal" class="cj" textLength="17.5" lengthAdjust="spacingAndGlyphs">重量</text>
<text x="906" y="620" font-size="8" fill="#00ff00" stroke="#00ff00" stroke-width="0.35" text-anchor="start" font-weight="normal" class="cj" textLength="18.7" lengthAdjust="spacingAndGlyphs">比例</text>
<text x="838.5" y="628.5" font-size="6" fill="#00ff00" stroke="#00ff00" stroke-width="0.35" text-anchor="start" font-weight="bold" class="cj" textLength="35" lengthAdjust="spacingAndGlyphs">共 张第 张</text>
<text x="885.2" y="628.5" font-size="6" fill="#00ff00" stroke="#00ff00" stroke-width="0.35" text-anchor="start" font-weight="bold" class="cj" textLength="34.5" lengthAdjust="spacingAndGlyphs">共 页第 页</text>
</svg>
</body></html>
